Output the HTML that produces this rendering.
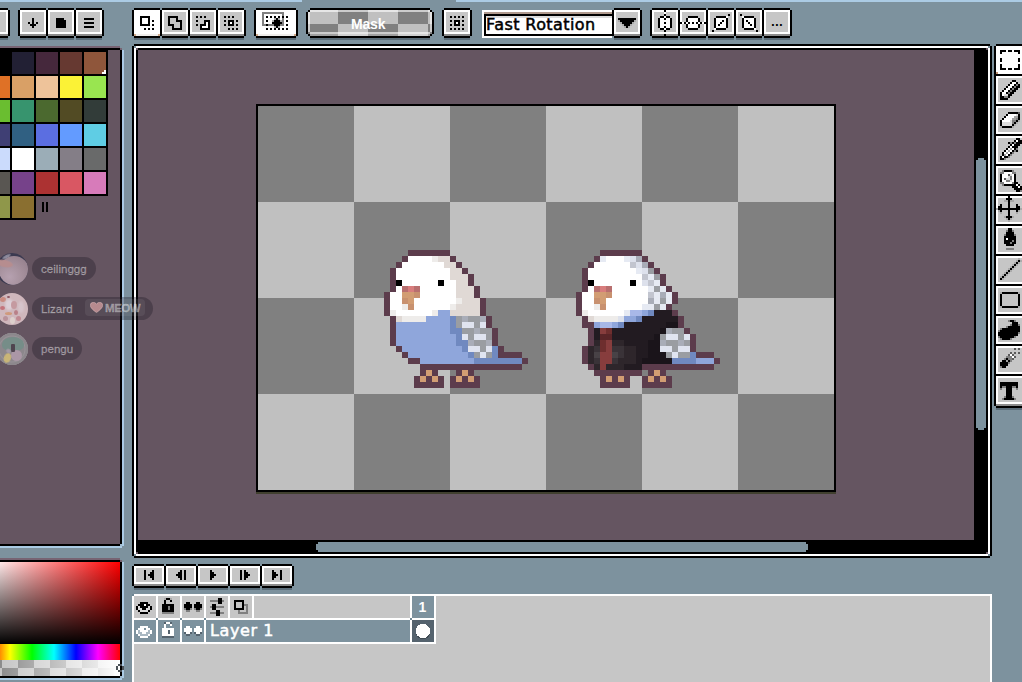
<!DOCTYPE html>
<html lang="en"><head><meta charset="utf-8"><title>Aseprite</title>
<style>
html,body{margin:0;padding:0;background:#7d929e;}
#app{position:relative;width:1022px;height:682px;overflow:hidden;background:#7d929e;font-family:"Liberation Sans",sans-serif;}
.t{position:absolute;white-space:pre;line-height:1;}

.av{position:absolute;left:-4px;width:32px;height:32px;border-radius:50%;overflow:hidden}
.av i{position:absolute;display:block;border-radius:50%}
.pill{position:absolute;left:32px;height:23px;border-radius:12px;background:rgba(28,22,32,.33);color:rgba(255,255,255,.38);-webkit-text-stroke:0.3px rgba(255,255,255,.38);
 font:500 11.6px "Liberation Sans",sans-serif;line-height:24px;white-space:pre;box-sizing:border-box;padding-left:9px}
.badge{position:absolute;left:53px;top:2px;height:17px;width:60px;border-radius:4px;background:rgba(255,255,255,.07);
 font:bold 11.5px "Liberation Sans",sans-serif;line-height:18.5px;box-sizing:border-box;padding-left:20px;letter-spacing:-0.45px}
.heart{position:absolute;left:5px;top:3px;width:13px;height:11px}

</style></head><body>
<div id="app">
<svg width="1022" height="682" viewBox="0 0 1022 682" shape-rendering="crispEdges" style="position:absolute;left:0;top:0"><rect x="0" y="0" width="1022" height="682" fill="#7d929e"/>
<rect x="0" y="0" width="302" height="2" fill="#abcbe4"/>
<rect x="456" y="0" width="566" height="2" fill="#abcbe4"/>
<rect x="-18" y="8" width="26" height="30" fill="#000"/>
<rect x="-20" y="10" width="30" height="26" fill="#000"/>
<rect x="-18" y="10" width="26" height="24" fill="#fff"/>
<rect x="-16" y="12" width="22" height="20" fill="#c6c6c6"/>
<rect x="-18" y="34" width="26" height="2" fill="#8c8c8c"/>
<rect x="-18" y="38" width="26" height="2" fill="#5b6d79"/>
<rect x="20" y="8" width="26" height="30" fill="#000"/>
<rect x="18" y="10" width="30" height="26" fill="#000"/>
<rect x="20" y="10" width="26" height="24" fill="#fff"/>
<rect x="22" y="12" width="22" height="20" fill="#c6c6c6"/>
<rect x="20" y="34" width="26" height="2" fill="#8c8c8c"/>
<rect x="20" y="38" width="26" height="2" fill="#5b6d79"/>
<rect x="32" y="18" width="2" height="2" fill="#000"/>
<rect x="32" y="20" width="2" height="2" fill="#000"/>
<rect x="28" y="22" width="2" height="2" fill="#000"/>
<rect x="32" y="22" width="2" height="2" fill="#000"/>
<rect x="36" y="22" width="2" height="2" fill="#000"/>
<rect x="30" y="24" width="6" height="2" fill="#000"/>
<rect x="32" y="26" width="2" height="2" fill="#000"/>
<rect x="48" y="8" width="26" height="30" fill="#000"/>
<rect x="46" y="10" width="30" height="26" fill="#000"/>
<rect x="48" y="10" width="26" height="24" fill="#fff"/>
<rect x="50" y="12" width="22" height="20" fill="#c6c6c6"/>
<rect x="48" y="34" width="26" height="2" fill="#8c8c8c"/>
<rect x="48" y="38" width="26" height="2" fill="#5b6d79"/>
<rect x="56" y="18" width="8" height="2" fill="#000"/>
<rect x="56" y="20" width="10" height="2" fill="#000"/>
<rect x="56" y="22" width="10" height="2" fill="#000"/>
<rect x="56" y="24" width="10" height="2" fill="#000"/>
<rect x="56" y="26" width="10" height="2" fill="#000"/>
<rect x="76" y="8" width="26" height="30" fill="#000"/>
<rect x="74" y="10" width="30" height="26" fill="#000"/>
<rect x="76" y="10" width="26" height="24" fill="#fff"/>
<rect x="78" y="12" width="22" height="20" fill="#c6c6c6"/>
<rect x="76" y="34" width="26" height="2" fill="#8c8c8c"/>
<rect x="76" y="38" width="26" height="2" fill="#5b6d79"/>
<rect x="84" y="18" width="10" height="2" fill="#000"/>
<rect x="84" y="22" width="10" height="2" fill="#000"/>
<rect x="84" y="26" width="10" height="2" fill="#000"/>
<rect x="134" y="8" width="26" height="30" fill="#000"/>
<rect x="132" y="10" width="30" height="26" fill="#000"/>
<rect x="134" y="10" width="26" height="24" fill="#fff"/>
<rect x="134" y="34" width="26" height="2" fill="#f0eeec"/>
<rect x="134" y="34" width="2" height="2" fill="#cfa888"/>
<rect x="158" y="34" width="2" height="2" fill="#cfa888"/>
<rect x="134" y="38" width="26" height="2" fill="#5b6d79"/>
<rect x="140" y="16" width="10" height="2" fill="#000"/>
<rect x="140" y="18" width="2" height="2" fill="#000"/>
<rect x="148" y="18" width="2" height="2" fill="#000"/>
<rect x="140" y="20" width="2" height="2" fill="#000"/>
<rect x="148" y="20" width="2" height="2" fill="#000"/>
<rect x="152" y="20" width="2" height="2" fill="#000"/>
<rect x="140" y="22" width="2" height="2" fill="#000"/>
<rect x="148" y="22" width="2" height="2" fill="#000"/>
<rect x="140" y="24" width="10" height="2" fill="#000"/>
<rect x="152" y="24" width="2" height="2" fill="#000"/>
<rect x="144" y="28" width="2" height="2" fill="#000"/>
<rect x="148" y="28" width="2" height="2" fill="#000"/>
<rect x="152" y="28" width="2" height="2" fill="#000"/>
<rect x="162" y="8" width="26" height="30" fill="#000"/>
<rect x="160" y="10" width="30" height="26" fill="#000"/>
<rect x="162" y="10" width="26" height="24" fill="#fff"/>
<rect x="164" y="12" width="22" height="20" fill="#c6c6c6"/>
<rect x="162" y="34" width="26" height="2" fill="#8c8c8c"/>
<rect x="162" y="38" width="26" height="2" fill="#5b6d79"/>
<rect x="168" y="16" width="10" height="2" fill="#000"/>
<rect x="168" y="18" width="2" height="2" fill="#000"/>
<rect x="176" y="18" width="2" height="2" fill="#000"/>
<rect x="168" y="20" width="2" height="2" fill="#000"/>
<rect x="176" y="20" width="6" height="2" fill="#000"/>
<rect x="168" y="22" width="2" height="2" fill="#000"/>
<rect x="180" y="22" width="2" height="2" fill="#000"/>
<rect x="168" y="24" width="6" height="2" fill="#000"/>
<rect x="180" y="24" width="2" height="2" fill="#000"/>
<rect x="172" y="26" width="2" height="2" fill="#000"/>
<rect x="180" y="26" width="2" height="2" fill="#000"/>
<rect x="172" y="28" width="10" height="2" fill="#000"/>
<rect x="190" y="8" width="26" height="30" fill="#000"/>
<rect x="188" y="10" width="30" height="26" fill="#000"/>
<rect x="190" y="10" width="26" height="24" fill="#fff"/>
<rect x="192" y="12" width="22" height="20" fill="#c6c6c6"/>
<rect x="190" y="34" width="26" height="2" fill="#8c8c8c"/>
<rect x="190" y="38" width="26" height="2" fill="#5b6d79"/>
<rect x="196" y="16" width="2" height="2" fill="#000"/>
<rect x="200" y="16" width="2" height="2" fill="#000"/>
<rect x="204" y="16" width="2" height="2" fill="#000"/>
<rect x="196" y="20" width="2" height="2" fill="#000"/>
<rect x="204" y="20" width="6" height="2" fill="#000"/>
<rect x="204" y="22" width="2" height="2" fill="#000"/>
<rect x="206" y="22" width="2" height="2" fill="#fff"/>
<rect x="208" y="22" width="2" height="2" fill="#000"/>
<rect x="196" y="24" width="2" height="2" fill="#000"/>
<rect x="200" y="24" width="6" height="2" fill="#000"/>
<rect x="206" y="24" width="2" height="2" fill="#fff"/>
<rect x="208" y="24" width="2" height="2" fill="#000"/>
<rect x="200" y="26" width="2" height="2" fill="#000"/>
<rect x="202" y="26" width="6" height="2" fill="#fff"/>
<rect x="208" y="26" width="2" height="2" fill="#000"/>
<rect x="200" y="28" width="10" height="2" fill="#000"/>
<rect x="218" y="8" width="26" height="30" fill="#000"/>
<rect x="216" y="10" width="30" height="26" fill="#000"/>
<rect x="218" y="10" width="26" height="24" fill="#fff"/>
<rect x="220" y="12" width="22" height="20" fill="#c6c6c6"/>
<rect x="218" y="34" width="26" height="2" fill="#8c8c8c"/>
<rect x="218" y="38" width="26" height="2" fill="#5b6d79"/>
<rect x="224" y="16" width="2" height="2" fill="#000"/>
<rect x="228" y="16" width="2" height="2" fill="#000"/>
<rect x="232" y="16" width="2" height="2" fill="#000"/>
<rect x="224" y="20" width="2" height="2" fill="#000"/>
<rect x="228" y="20" width="6" height="2" fill="#000"/>
<rect x="236" y="20" width="2" height="2" fill="#000"/>
<rect x="228" y="22" width="2" height="2" fill="#000"/>
<rect x="230" y="22" width="2" height="2" fill="#fff"/>
<rect x="232" y="22" width="2" height="2" fill="#000"/>
<rect x="224" y="24" width="2" height="2" fill="#000"/>
<rect x="228" y="24" width="6" height="2" fill="#000"/>
<rect x="236" y="24" width="2" height="2" fill="#000"/>
<rect x="228" y="28" width="2" height="2" fill="#000"/>
<rect x="232" y="28" width="2" height="2" fill="#000"/>
<rect x="236" y="28" width="2" height="2" fill="#000"/>
<rect x="256" y="8" width="40" height="30" fill="#000"/>
<rect x="254" y="10" width="44" height="26" fill="#000"/>
<rect x="256" y="10" width="40" height="24" fill="#fff"/>
<rect x="256" y="34" width="40" height="2" fill="#f0eeec"/>
<rect x="256" y="34" width="2" height="2" fill="#cfa888"/>
<rect x="294" y="34" width="2" height="2" fill="#cfa888"/>
<rect x="256" y="38" width="40" height="2" fill="#5b6d79"/>
<rect x="262" y="12" width="22" height="2" fill="#808080"/>
<rect x="262" y="14" width="2" height="2" fill="#808080"/>
<rect x="282" y="14" width="2" height="2" fill="#808080"/>
<rect x="262" y="16" width="2" height="2" fill="#808080"/>
<rect x="266" y="16" width="2" height="2" fill="#000"/>
<rect x="270" y="16" width="2" height="2" fill="#000"/>
<rect x="274" y="16" width="2" height="2" fill="#000"/>
<rect x="278" y="16" width="2" height="2" fill="#000"/>
<rect x="282" y="16" width="2" height="2" fill="#000"/>
<rect x="286" y="16" width="2" height="2" fill="#000"/>
<rect x="262" y="18" width="2" height="2" fill="#808080"/>
<rect x="274" y="18" width="2" height="2" fill="#aaaaaa"/>
<rect x="276" y="18" width="2" height="2" fill="#000"/>
<rect x="278" y="18" width="2" height="2" fill="#aaaaaa"/>
<rect x="282" y="18" width="2" height="2" fill="#808080"/>
<rect x="262" y="20" width="2" height="2" fill="#808080"/>
<rect x="266" y="20" width="2" height="2" fill="#000"/>
<rect x="272" y="20" width="2" height="2" fill="#aaaaaa"/>
<rect x="274" y="20" width="6" height="2" fill="#000"/>
<rect x="280" y="20" width="2" height="2" fill="#aaaaaa"/>
<rect x="282" y="20" width="2" height="2" fill="#808080"/>
<rect x="286" y="20" width="2" height="2" fill="#000"/>
<rect x="262" y="22" width="2" height="2" fill="#808080"/>
<rect x="272" y="22" width="10" height="2" fill="#000"/>
<rect x="282" y="22" width="2" height="2" fill="#808080"/>
<rect x="262" y="24" width="4" height="2" fill="#808080"/>
<rect x="266" y="24" width="2" height="2" fill="#000"/>
<rect x="268" y="24" width="6" height="2" fill="#808080"/>
<rect x="274" y="24" width="6" height="2" fill="#000"/>
<rect x="280" y="24" width="4" height="2" fill="#808080"/>
<rect x="286" y="24" width="2" height="2" fill="#000"/>
<rect x="274" y="26" width="2" height="2" fill="#aaaaaa"/>
<rect x="276" y="26" width="2" height="2" fill="#000"/>
<rect x="278" y="26" width="2" height="2" fill="#aaaaaa"/>
<rect x="266" y="28" width="2" height="2" fill="#000"/>
<rect x="270" y="28" width="2" height="2" fill="#000"/>
<rect x="274" y="28" width="2" height="2" fill="#000"/>
<rect x="278" y="28" width="2" height="2" fill="#000"/>
<rect x="282" y="28" width="2" height="2" fill="#000"/>
<rect x="286" y="28" width="2" height="2" fill="#000"/>
<rect x="310" y="8" width="120" height="30" fill="#000"/>
<rect x="308" y="10" width="124" height="26" fill="#000"/>
<rect x="306" y="12" width="128" height="22" fill="#000"/>
<rect x="310" y="38" width="120" height="2" fill="#5b6d79"/>
<rect x="308" y="10" width="30" height="14" fill="#c0c0c0"/>
<rect x="308" y="24" width="30" height="12" fill="#808080"/>
<rect x="338" y="10" width="30" height="14" fill="#808080"/>
<rect x="338" y="24" width="30" height="12" fill="#c0c0c0"/>
<rect x="368" y="10" width="30" height="14" fill="#c0c0c0"/>
<rect x="368" y="24" width="30" height="12" fill="#808080"/>
<rect x="398" y="10" width="30" height="14" fill="#808080"/>
<rect x="398" y="24" width="30" height="12" fill="#c0c0c0"/>
<rect x="428" y="10" width="4" height="14" fill="#c0c0c0"/>
<rect x="428" y="24" width="4" height="12" fill="#808080"/>
<rect x="310" y="10" width="120" height="2" fill="#fff" fill-opacity="0.6"/>
<rect x="308" y="12" width="2" height="20" fill="#fff" fill-opacity="0.6"/>
<rect x="430" y="12" width="2" height="20" fill="#fff" fill-opacity="0.6"/>
<rect x="310" y="32" width="120" height="2" fill="#fff" fill-opacity="0.6"/>
<rect x="310" y="34" width="120" height="2" fill="#fff" fill-opacity="0.25"/>
<rect x="308" y="10" width="2" height="2" fill="#000"/>
<rect x="430" y="10" width="2" height="2" fill="#000"/>
<rect x="308" y="34" width="2" height="2" fill="#000"/>
<rect x="430" y="34" width="2" height="2" fill="#000"/>
<rect x="444" y="8" width="26" height="30" fill="#000"/>
<rect x="442" y="10" width="30" height="26" fill="#000"/>
<rect x="444" y="10" width="26" height="24" fill="#fff"/>
<rect x="446" y="12" width="22" height="20" fill="#c6c6c6"/>
<rect x="444" y="34" width="26" height="2" fill="#8c8c8c"/>
<rect x="444" y="38" width="26" height="2" fill="#5b6d79"/>
<rect x="450" y="16" width="2" height="2" fill="#000"/>
<rect x="454" y="16" width="2" height="2" fill="#000"/>
<rect x="458" y="16" width="2" height="2" fill="#000"/>
<rect x="462" y="16" width="2" height="2" fill="#000"/>
<rect x="450" y="20" width="2" height="2" fill="#000"/>
<rect x="454" y="20" width="6" height="2" fill="#000"/>
<rect x="462" y="20" width="2" height="2" fill="#000"/>
<rect x="454" y="22" width="2" height="2" fill="#000"/>
<rect x="456" y="22" width="2" height="2" fill="#fff"/>
<rect x="458" y="22" width="2" height="2" fill="#000"/>
<rect x="450" y="24" width="2" height="2" fill="#000"/>
<rect x="454" y="24" width="6" height="2" fill="#000"/>
<rect x="462" y="24" width="2" height="2" fill="#000"/>
<rect x="450" y="28" width="2" height="2" fill="#000"/>
<rect x="454" y="28" width="2" height="2" fill="#000"/>
<rect x="458" y="28" width="2" height="2" fill="#000"/>
<rect x="462" y="28" width="2" height="2" fill="#000"/>
<rect x="482" y="10" width="130" height="28" fill="#fff"/>
<rect x="484" y="12" width="128" height="2" fill="#b09a8e"/>
<rect x="484" y="14" width="128" height="22" fill="#000"/>
<rect x="486" y="16" width="126" height="18" fill="#fff"/>
<rect x="486" y="16" width="126" height="2" fill="#dcdcdc"/>
<rect x="614" y="8" width="26" height="30" fill="#000"/>
<rect x="612" y="10" width="30" height="26" fill="#000"/>
<rect x="614" y="10" width="26" height="24" fill="#fff"/>
<rect x="616" y="12" width="22" height="20" fill="#c6c6c6"/>
<rect x="614" y="34" width="26" height="2" fill="#8c8c8c"/>
<rect x="614" y="38" width="26" height="2" fill="#5b6d79"/>
<rect x="618" y="18" width="18" height="2" fill="#000"/>
<rect x="618" y="20" width="2" height="2" fill="#aaaaaa"/>
<rect x="620" y="20" width="14" height="2" fill="#000"/>
<rect x="634" y="20" width="2" height="2" fill="#aaaaaa"/>
<rect x="620" y="22" width="2" height="2" fill="#aaaaaa"/>
<rect x="622" y="22" width="10" height="2" fill="#000"/>
<rect x="632" y="22" width="2" height="2" fill="#aaaaaa"/>
<rect x="622" y="24" width="2" height="2" fill="#aaaaaa"/>
<rect x="624" y="24" width="6" height="2" fill="#000"/>
<rect x="630" y="24" width="2" height="2" fill="#aaaaaa"/>
<rect x="624" y="26" width="2" height="2" fill="#aaaaaa"/>
<rect x="626" y="26" width="2" height="2" fill="#000"/>
<rect x="628" y="26" width="2" height="2" fill="#aaaaaa"/>
<rect x="652" y="8" width="26" height="30" fill="#000"/>
<rect x="650" y="10" width="30" height="26" fill="#000"/>
<rect x="652" y="10" width="26" height="24" fill="#fff"/>
<rect x="654" y="12" width="22" height="20" fill="#c6c6c6"/>
<rect x="652" y="34" width="26" height="2" fill="#8c8c8c"/>
<rect x="652" y="38" width="26" height="2" fill="#5b6d79"/>
<rect x="664" y="10" width="2" height="2" fill="#000"/>
<rect x="664" y="12" width="2" height="2" fill="#fff"/>
<rect x="664" y="14" width="2" height="2" fill="#000"/>
<rect x="660" y="16" width="4" height="2" fill="#000"/>
<rect x="664" y="16" width="2" height="2" fill="#fff"/>
<rect x="666" y="16" width="4" height="2" fill="#000"/>
<rect x="658" y="18" width="2" height="2" fill="#000"/>
<rect x="660" y="18" width="4" height="2" fill="#fff"/>
<rect x="664" y="18" width="2" height="2" fill="#000"/>
<rect x="666" y="18" width="4" height="2" fill="#fff"/>
<rect x="670" y="18" width="2" height="2" fill="#000"/>
<rect x="658" y="20" width="2" height="2" fill="#000"/>
<rect x="660" y="20" width="10" height="2" fill="#fff"/>
<rect x="670" y="20" width="2" height="2" fill="#000"/>
<rect x="658" y="22" width="2" height="2" fill="#000"/>
<rect x="660" y="22" width="4" height="2" fill="#fff"/>
<rect x="664" y="22" width="2" height="2" fill="#000"/>
<rect x="666" y="22" width="4" height="2" fill="#fff"/>
<rect x="670" y="22" width="2" height="2" fill="#000"/>
<rect x="658" y="24" width="2" height="2" fill="#000"/>
<rect x="660" y="24" width="10" height="2" fill="#fff"/>
<rect x="670" y="24" width="2" height="2" fill="#000"/>
<rect x="658" y="26" width="2" height="2" fill="#000"/>
<rect x="660" y="26" width="4" height="2" fill="#fff"/>
<rect x="664" y="26" width="2" height="2" fill="#000"/>
<rect x="666" y="26" width="4" height="2" fill="#fff"/>
<rect x="670" y="26" width="2" height="2" fill="#000"/>
<rect x="660" y="28" width="4" height="2" fill="#000"/>
<rect x="664" y="28" width="2" height="2" fill="#fff"/>
<rect x="666" y="28" width="4" height="2" fill="#000"/>
<rect x="664" y="30" width="2" height="2" fill="#000"/>
<rect x="664" y="32" width="2" height="2" fill="#fff"/>
<rect x="664" y="34" width="2" height="2" fill="#000"/>
<rect x="680" y="8" width="26" height="30" fill="#000"/>
<rect x="678" y="10" width="30" height="26" fill="#000"/>
<rect x="680" y="10" width="26" height="24" fill="#fff"/>
<rect x="682" y="12" width="22" height="20" fill="#c6c6c6"/>
<rect x="680" y="34" width="26" height="2" fill="#8c8c8c"/>
<rect x="680" y="38" width="26" height="2" fill="#5b6d79"/>
<rect x="688" y="16" width="10" height="2" fill="#000"/>
<rect x="686" y="18" width="2" height="2" fill="#000"/>
<rect x="688" y="18" width="10" height="2" fill="#fff"/>
<rect x="698" y="18" width="2" height="2" fill="#000"/>
<rect x="686" y="20" width="2" height="2" fill="#000"/>
<rect x="688" y="20" width="10" height="2" fill="#fff"/>
<rect x="698" y="20" width="2" height="2" fill="#000"/>
<rect x="680" y="22" width="2" height="2" fill="#000"/>
<rect x="682" y="22" width="2" height="2" fill="#fff"/>
<rect x="684" y="22" width="2" height="2" fill="#000"/>
<rect x="686" y="22" width="2" height="2" fill="#fff"/>
<rect x="688" y="22" width="2" height="2" fill="#000"/>
<rect x="690" y="22" width="2" height="2" fill="#fff"/>
<rect x="692" y="22" width="2" height="2" fill="#000"/>
<rect x="694" y="22" width="2" height="2" fill="#fff"/>
<rect x="696" y="22" width="2" height="2" fill="#000"/>
<rect x="698" y="22" width="2" height="2" fill="#fff"/>
<rect x="700" y="22" width="2" height="2" fill="#000"/>
<rect x="702" y="22" width="2" height="2" fill="#fff"/>
<rect x="704" y="22" width="2" height="2" fill="#000"/>
<rect x="686" y="24" width="2" height="2" fill="#000"/>
<rect x="688" y="24" width="10" height="2" fill="#fff"/>
<rect x="698" y="24" width="2" height="2" fill="#000"/>
<rect x="686" y="26" width="2" height="2" fill="#000"/>
<rect x="688" y="26" width="10" height="2" fill="#fff"/>
<rect x="698" y="26" width="2" height="2" fill="#000"/>
<rect x="688" y="28" width="10" height="2" fill="#000"/>
<rect x="708" y="8" width="26" height="30" fill="#000"/>
<rect x="706" y="10" width="30" height="26" fill="#000"/>
<rect x="708" y="10" width="26" height="24" fill="#fff"/>
<rect x="710" y="12" width="22" height="20" fill="#c6c6c6"/>
<rect x="708" y="34" width="26" height="2" fill="#8c8c8c"/>
<rect x="708" y="38" width="26" height="2" fill="#5b6d79"/>
<rect x="728" y="14" width="2" height="2" fill="#000"/>
<rect x="716" y="16" width="10" height="2" fill="#000"/>
<rect x="726" y="16" width="2" height="2" fill="#fff"/>
<rect x="714" y="18" width="2" height="2" fill="#000"/>
<rect x="716" y="18" width="10" height="2" fill="#fff"/>
<rect x="726" y="18" width="2" height="2" fill="#000"/>
<rect x="714" y="20" width="2" height="2" fill="#000"/>
<rect x="716" y="20" width="6" height="2" fill="#fff"/>
<rect x="722" y="20" width="2" height="2" fill="#000"/>
<rect x="724" y="20" width="2" height="2" fill="#fff"/>
<rect x="726" y="20" width="2" height="2" fill="#000"/>
<rect x="714" y="22" width="2" height="2" fill="#000"/>
<rect x="716" y="22" width="4" height="2" fill="#fff"/>
<rect x="720" y="22" width="2" height="2" fill="#000"/>
<rect x="722" y="22" width="4" height="2" fill="#fff"/>
<rect x="726" y="22" width="2" height="2" fill="#000"/>
<rect x="714" y="24" width="2" height="2" fill="#000"/>
<rect x="716" y="24" width="2" height="2" fill="#fff"/>
<rect x="718" y="24" width="2" height="2" fill="#000"/>
<rect x="720" y="24" width="6" height="2" fill="#fff"/>
<rect x="726" y="24" width="2" height="2" fill="#000"/>
<rect x="714" y="26" width="2" height="2" fill="#000"/>
<rect x="716" y="26" width="10" height="2" fill="#fff"/>
<rect x="726" y="26" width="2" height="2" fill="#000"/>
<rect x="714" y="28" width="2" height="2" fill="#fff"/>
<rect x="716" y="28" width="10" height="2" fill="#000"/>
<rect x="712" y="30" width="2" height="2" fill="#000"/>
<rect x="736" y="8" width="26" height="30" fill="#000"/>
<rect x="734" y="10" width="30" height="26" fill="#000"/>
<rect x="736" y="10" width="26" height="24" fill="#fff"/>
<rect x="738" y="12" width="22" height="20" fill="#c6c6c6"/>
<rect x="736" y="34" width="26" height="2" fill="#8c8c8c"/>
<rect x="736" y="38" width="26" height="2" fill="#5b6d79"/>
<rect x="740" y="14" width="2" height="2" fill="#000"/>
<rect x="742" y="16" width="2" height="2" fill="#fff"/>
<rect x="744" y="16" width="10" height="2" fill="#000"/>
<rect x="742" y="18" width="2" height="2" fill="#000"/>
<rect x="744" y="18" width="10" height="2" fill="#fff"/>
<rect x="754" y="18" width="2" height="2" fill="#000"/>
<rect x="742" y="20" width="2" height="2" fill="#000"/>
<rect x="744" y="20" width="2" height="2" fill="#fff"/>
<rect x="746" y="20" width="2" height="2" fill="#000"/>
<rect x="748" y="20" width="6" height="2" fill="#fff"/>
<rect x="754" y="20" width="2" height="2" fill="#000"/>
<rect x="742" y="22" width="2" height="2" fill="#000"/>
<rect x="744" y="22" width="4" height="2" fill="#fff"/>
<rect x="748" y="22" width="2" height="2" fill="#000"/>
<rect x="750" y="22" width="4" height="2" fill="#fff"/>
<rect x="754" y="22" width="2" height="2" fill="#000"/>
<rect x="742" y="24" width="2" height="2" fill="#000"/>
<rect x="744" y="24" width="6" height="2" fill="#fff"/>
<rect x="750" y="24" width="2" height="2" fill="#000"/>
<rect x="752" y="24" width="2" height="2" fill="#fff"/>
<rect x="754" y="24" width="2" height="2" fill="#000"/>
<rect x="742" y="26" width="2" height="2" fill="#000"/>
<rect x="744" y="26" width="10" height="2" fill="#fff"/>
<rect x="754" y="26" width="2" height="2" fill="#000"/>
<rect x="744" y="28" width="10" height="2" fill="#000"/>
<rect x="754" y="28" width="2" height="2" fill="#fff"/>
<rect x="756" y="30" width="2" height="2" fill="#000"/>
<rect x="764" y="8" width="26" height="30" fill="#000"/>
<rect x="762" y="10" width="30" height="26" fill="#000"/>
<rect x="764" y="10" width="26" height="24" fill="#fff"/>
<rect x="766" y="12" width="22" height="20" fill="#c6c6c6"/>
<rect x="764" y="34" width="26" height="2" fill="#8c8c8c"/>
<rect x="764" y="38" width="26" height="2" fill="#5b6d79"/>
<rect x="0" y="46" width="120" height="2" fill="#776473"/>
<rect x="0" y="48" width="120" height="2" fill="#000"/>
<rect x="120" y="50" width="2" height="494" fill="#000"/>
<rect x="0" y="544" width="120" height="2" fill="#000"/>
<rect x="120" y="48" width="2" height="2" fill="#776473"/>
<rect x="120" y="544" width="2" height="2" fill="#9fb9cc"/>
<rect x="122" y="50" width="2" height="496" fill="#abcbe4"/>
<rect x="0" y="546" width="122" height="2" fill="#abcbe4"/>
<rect x="0" y="50" width="120" height="494" fill="#655561"/>
<rect x="0" y="50" width="108" height="146" fill="#000"/>
<rect x="0" y="196" width="36" height="24" fill="#000"/>
<rect x="0" y="52" width="10" height="22" fill="#000000"/>
<rect x="12" y="52" width="22" height="22" fill="#222034"/>
<rect x="36" y="52" width="22" height="22" fill="#45283c"/>
<rect x="60" y="52" width="22" height="22" fill="#663931"/>
<rect x="84" y="52" width="22" height="22" fill="#8f563b"/>
<rect x="0" y="76" width="10" height="22" fill="#df7126"/>
<rect x="12" y="76" width="22" height="22" fill="#d9a066"/>
<rect x="36" y="76" width="22" height="22" fill="#eec39a"/>
<rect x="60" y="76" width="22" height="22" fill="#fbf236"/>
<rect x="84" y="76" width="22" height="22" fill="#99e550"/>
<rect x="0" y="100" width="10" height="22" fill="#6abe30"/>
<rect x="12" y="100" width="22" height="22" fill="#37946e"/>
<rect x="36" y="100" width="22" height="22" fill="#4b692f"/>
<rect x="60" y="100" width="22" height="22" fill="#524b24"/>
<rect x="84" y="100" width="22" height="22" fill="#323c39"/>
<rect x="0" y="124" width="10" height="22" fill="#3f3f74"/>
<rect x="12" y="124" width="22" height="22" fill="#306082"/>
<rect x="36" y="124" width="22" height="22" fill="#5b6ee1"/>
<rect x="60" y="124" width="22" height="22" fill="#639bff"/>
<rect x="84" y="124" width="22" height="22" fill="#5fcde4"/>
<rect x="0" y="148" width="10" height="22" fill="#cbdbfc"/>
<rect x="12" y="148" width="22" height="22" fill="#ffffff"/>
<rect x="36" y="148" width="22" height="22" fill="#9badb7"/>
<rect x="60" y="148" width="22" height="22" fill="#847e87"/>
<rect x="84" y="148" width="22" height="22" fill="#696a6a"/>
<rect x="0" y="172" width="10" height="22" fill="#595652"/>
<rect x="12" y="172" width="22" height="22" fill="#76428a"/>
<rect x="36" y="172" width="22" height="22" fill="#ac3232"/>
<rect x="60" y="172" width="22" height="22" fill="#d95763"/>
<rect x="84" y="172" width="22" height="22" fill="#d77bba"/>
<rect x="0" y="196" width="10" height="22" fill="#8f974a"/>
<rect x="12" y="196" width="22" height="22" fill="#8a6f30"/>
<rect x="104" y="70" width="2" height="2" fill="#fff"/>
<rect x="102" y="72" width="4" height="2" fill="#fff"/>
<rect x="42" y="202" width="2" height="10" fill="#000"/>
<rect x="46" y="202" width="2" height="10" fill="#000"/>
<rect x="0" y="558" width="120" height="2" fill="#776473"/>
<rect x="0" y="560" width="120" height="2" fill="#000"/>
<rect x="120" y="562" width="2" height="114" fill="#000"/>
<rect x="120" y="560" width="2" height="2" fill="#776473"/>
<rect x="0" y="676" width="120" height="2" fill="#000"/>
<rect x="120" y="676" width="2" height="2" fill="#9fb9cc"/>
<rect x="122" y="562" width="2" height="116" fill="#abcbe4"/>
<rect x="0" y="678" width="122" height="2" fill="#abcbe4"/>
<defs><linearGradient id="gs" x1="0" x2="1" y1="0" y2="0"><stop offset="0" stop-color="#fff"/><stop offset="1" stop-color="#f00"/></linearGradient><linearGradient id="gv" x1="0" x2="0" y1="0" y2="1"><stop offset="0" stop-color="#000" stop-opacity="0"/><stop offset="1" stop-color="#000"/></linearGradient><linearGradient id="gh" x1="0" x2="1" y1="0" y2="0"><stop offset="0" stop-color="#f00"/><stop offset="0.1667" stop-color="#ff0"/><stop offset="0.3333" stop-color="#0f0"/><stop offset="0.5" stop-color="#0ff"/><stop offset="0.6667" stop-color="#00f"/><stop offset="0.8333" stop-color="#f0f"/><stop offset="1" stop-color="#f00"/></linearGradient><linearGradient id="ga" x1="0" x2="1" y1="0" y2="0"><stop offset="0" stop-color="#fff" stop-opacity="0"/><stop offset="1" stop-color="#fff"/></linearGradient><clipPath id="cpL"><rect x="0" y="562" width="120" height="114"/></clipPath></defs>
<g clip-path="url(#cpL)">
<rect x="-12" y="562" width="132" height="82" fill="url(#gs)"/>
<rect x="-12" y="562" width="132" height="82" fill="url(#gv)"/>
<rect x="-12" y="644" width="132" height="16" fill="url(#gh)"/>
<rect x="-14" y="660" width="16" height="8" fill="#808080"/>
<rect x="-14" y="668" width="16" height="8" fill="#c0c0c0"/>
<rect x="2" y="660" width="16" height="8" fill="#c0c0c0"/>
<rect x="2" y="668" width="16" height="8" fill="#808080"/>
<rect x="18" y="660" width="16" height="8" fill="#808080"/>
<rect x="18" y="668" width="16" height="8" fill="#c0c0c0"/>
<rect x="34" y="660" width="16" height="8" fill="#c0c0c0"/>
<rect x="34" y="668" width="16" height="8" fill="#808080"/>
<rect x="50" y="660" width="16" height="8" fill="#808080"/>
<rect x="50" y="668" width="16" height="8" fill="#c0c0c0"/>
<rect x="66" y="660" width="16" height="8" fill="#c0c0c0"/>
<rect x="66" y="668" width="16" height="8" fill="#808080"/>
<rect x="82" y="660" width="16" height="8" fill="#808080"/>
<rect x="82" y="668" width="16" height="8" fill="#c0c0c0"/>
<rect x="98" y="660" width="16" height="8" fill="#c0c0c0"/>
<rect x="98" y="668" width="16" height="8" fill="#808080"/>
<rect x="114" y="660" width="16" height="8" fill="#808080"/>
<rect x="114" y="668" width="16" height="8" fill="#c0c0c0"/>
<rect x="-12" y="660" width="132" height="16" fill="url(#ga)"/>
</g>
<rect x="118" y="664" width="4" height="2" fill="#4c5258"/>
<rect x="116" y="666" width="2" height="2" fill="#4c5258"/>
<rect x="122" y="666" width="2" height="2" fill="#4c5258"/>
<rect x="116" y="668" width="2" height="2" fill="#4c5258"/>
<rect x="122" y="668" width="2" height="2" fill="#4c5258"/>
<rect x="118" y="670" width="4" height="2" fill="#4c5258"/>
<rect x="134" y="44" width="856" height="514" fill="#000"/>
<rect x="132" y="46" width="860" height="510" fill="#000"/>
<rect x="134" y="46" width="856" height="510" fill="#fff"/>
<rect x="134" y="46" width="2" height="2" fill="#7d929e"/>
<rect x="988" y="46" width="2" height="2" fill="#7d929e"/>
<rect x="134" y="554" width="2" height="2" fill="#7d929e"/>
<rect x="988" y="554" width="2" height="2" fill="#7d929e"/>
<rect x="136" y="48" width="852" height="506" fill="#000"/>
<rect x="138" y="50" width="836" height="490" fill="#655561"/>
<rect x="136" y="48" width="2" height="2" fill="#655561"/>
<rect x="986" y="48" width="2" height="2" fill="#655561"/>
<rect x="136" y="552" width="2" height="2" fill="#655561"/>
<rect x="986" y="552" width="2" height="2" fill="#655561"/>
<rect x="976" y="160" width="10" height="268" fill="#7d929e"/>
<rect x="978" y="158" width="6" height="272" fill="#7d929e"/>
<rect x="318" y="542" width="488" height="10" fill="#7d929e"/>
<rect x="316" y="544" width="492" height="6" fill="#7d929e"/>
<rect x="256" y="104" width="580" height="388" fill="#000"/>
<rect x="256" y="492" width="580" height="2" fill="#41402f"/>
<rect x="258" y="106" width="96" height="96" fill="#808080"/>
<rect x="354" y="106" width="96" height="96" fill="#c0c0c0"/>
<rect x="450" y="106" width="96" height="96" fill="#808080"/>
<rect x="546" y="106" width="96" height="96" fill="#c0c0c0"/>
<rect x="642" y="106" width="96" height="96" fill="#808080"/>
<rect x="738" y="106" width="96" height="96" fill="#c0c0c0"/>
<rect x="258" y="202" width="96" height="96" fill="#c0c0c0"/>
<rect x="354" y="202" width="96" height="96" fill="#808080"/>
<rect x="450" y="202" width="96" height="96" fill="#c0c0c0"/>
<rect x="546" y="202" width="96" height="96" fill="#808080"/>
<rect x="642" y="202" width="96" height="96" fill="#c0c0c0"/>
<rect x="738" y="202" width="96" height="96" fill="#808080"/>
<rect x="258" y="298" width="96" height="96" fill="#808080"/>
<rect x="354" y="298" width="96" height="96" fill="#c0c0c0"/>
<rect x="450" y="298" width="96" height="96" fill="#808080"/>
<rect x="546" y="298" width="96" height="96" fill="#c0c0c0"/>
<rect x="642" y="298" width="96" height="96" fill="#808080"/>
<rect x="738" y="298" width="96" height="96" fill="#c0c0c0"/>
<rect x="258" y="394" width="96" height="96" fill="#c0c0c0"/>
<rect x="354" y="394" width="96" height="96" fill="#808080"/>
<rect x="450" y="394" width="96" height="96" fill="#c0c0c0"/>
<rect x="546" y="394" width="96" height="96" fill="#808080"/>
<rect x="642" y="394" width="96" height="96" fill="#c0c0c0"/>
<rect x="738" y="394" width="96" height="96" fill="#808080"/>
<rect x="408" y="250" width="42" height="6" fill="#5c3c4c"/>
<rect x="402" y="256" width="6" height="6" fill="#5c3c4c"/>
<rect x="408" y="256" width="24" height="6" fill="#ffffff"/>
<rect x="432" y="256" width="6" height="6" fill="#eeecea"/>
<rect x="438" y="256" width="12" height="6" fill="#e0d9d5"/>
<rect x="450" y="256" width="6" height="6" fill="#5c3c4c"/>
<rect x="396" y="262" width="6" height="6" fill="#5c3c4c"/>
<rect x="402" y="262" width="42" height="6" fill="#ffffff"/>
<rect x="444" y="262" width="12" height="6" fill="#e0d9d5"/>
<rect x="456" y="262" width="6" height="6" fill="#5c3c4c"/>
<rect x="390" y="268" width="6" height="6" fill="#5c3c4c"/>
<rect x="396" y="268" width="54" height="6" fill="#ffffff"/>
<rect x="450" y="268" width="12" height="6" fill="#e0d9d5"/>
<rect x="462" y="268" width="6" height="6" fill="#5c3c4c"/>
<rect x="390" y="274" width="6" height="6" fill="#5c3c4c"/>
<rect x="396" y="274" width="54" height="6" fill="#ffffff"/>
<rect x="450" y="274" width="18" height="6" fill="#e0d9d5"/>
<rect x="468" y="274" width="6" height="6" fill="#5c3c4c"/>
<rect x="390" y="280" width="6" height="6" fill="#5c3c4c"/>
<rect x="396" y="280" width="6" height="6" fill="#000000"/>
<rect x="402" y="280" width="36" height="6" fill="#ffffff"/>
<rect x="438" y="280" width="6" height="6" fill="#000000"/>
<rect x="444" y="280" width="12" height="6" fill="#ffffff"/>
<rect x="456" y="280" width="12" height="6" fill="#e0d9d5"/>
<rect x="468" y="280" width="6" height="6" fill="#5c3c4c"/>
<rect x="390" y="286" width="6" height="6" fill="#5c3c4c"/>
<rect x="396" y="286" width="6" height="6" fill="#ffffff"/>
<rect x="402" y="286" width="6" height="6" fill="#b86f6f"/>
<rect x="408" y="286" width="6" height="6" fill="#d87d7d"/>
<rect x="414" y="286" width="6" height="6" fill="#b86f6f"/>
<rect x="420" y="286" width="36" height="6" fill="#ffffff"/>
<rect x="456" y="286" width="18" height="6" fill="#e0d9d5"/>
<rect x="474" y="286" width="6" height="6" fill="#5c3c4c"/>
<rect x="384" y="292" width="6" height="6" fill="#5c3c4c"/>
<rect x="390" y="292" width="12" height="6" fill="#ffffff"/>
<rect x="402" y="292" width="12" height="6" fill="#d29d73"/>
<rect x="414" y="292" width="6" height="6" fill="#c8916f"/>
<rect x="420" y="292" width="36" height="6" fill="#ffffff"/>
<rect x="456" y="292" width="18" height="6" fill="#e0d9d5"/>
<rect x="474" y="292" width="6" height="6" fill="#5c3c4c"/>
<rect x="384" y="298" width="6" height="6" fill="#5c3c4c"/>
<rect x="390" y="298" width="12" height="6" fill="#ffffff"/>
<rect x="402" y="298" width="6" height="6" fill="#c8916f"/>
<rect x="408" y="298" width="6" height="6" fill="#d29d73"/>
<rect x="414" y="298" width="42" height="6" fill="#ffffff"/>
<rect x="456" y="298" width="6" height="6" fill="#eeecea"/>
<rect x="462" y="298" width="18" height="6" fill="#e0d9d5"/>
<rect x="480" y="298" width="6" height="6" fill="#5c3c4c"/>
<rect x="384" y="304" width="6" height="6" fill="#5c3c4c"/>
<rect x="390" y="304" width="12" height="6" fill="#ffffff"/>
<rect x="402" y="304" width="6" height="6" fill="#eeecea"/>
<rect x="408" y="304" width="6" height="6" fill="#c8916f"/>
<rect x="414" y="304" width="36" height="6" fill="#ffffff"/>
<rect x="450" y="304" width="6" height="6" fill="#eeecea"/>
<rect x="456" y="304" width="24" height="6" fill="#e0d9d5"/>
<rect x="480" y="304" width="6" height="6" fill="#5c3c4c"/>
<rect x="384" y="310" width="6" height="6" fill="#5c3c4c"/>
<rect x="390" y="310" width="6" height="6" fill="#eeecea"/>
<rect x="396" y="310" width="36" height="6" fill="#ffffff"/>
<rect x="432" y="310" width="6" height="6" fill="#eeecea"/>
<rect x="438" y="310" width="12" height="6" fill="#8fa6db"/>
<rect x="450" y="310" width="30" height="6" fill="#e0d9d5"/>
<rect x="480" y="310" width="6" height="6" fill="#5c3c4c"/>
<rect x="390" y="316" width="6" height="6" fill="#5c3c4c"/>
<rect x="396" y="316" width="6" height="6" fill="#e0d9d5"/>
<rect x="402" y="316" width="24" height="6" fill="#eeecea"/>
<rect x="426" y="316" width="24" height="6" fill="#8fa6db"/>
<rect x="450" y="316" width="6" height="6" fill="#7089c0"/>
<rect x="456" y="316" width="6" height="6" fill="#9a9da2"/>
<rect x="462" y="316" width="6" height="6" fill="#a9adb8"/>
<rect x="468" y="316" width="12" height="6" fill="#9a9da2"/>
<rect x="480" y="316" width="6" height="6" fill="#a9adb8"/>
<rect x="486" y="316" width="6" height="6" fill="#5c3c4c"/>
<rect x="390" y="322" width="6" height="6" fill="#5c3c4c"/>
<rect x="396" y="322" width="54" height="6" fill="#8fa6db"/>
<rect x="450" y="322" width="6" height="6" fill="#7089c0"/>
<rect x="456" y="322" width="6" height="6" fill="#9a9da2"/>
<rect x="462" y="322" width="12" height="6" fill="#e0e4f0"/>
<rect x="474" y="322" width="6" height="6" fill="#9a9da2"/>
<rect x="480" y="322" width="6" height="6" fill="#e0e4f0"/>
<rect x="486" y="322" width="6" height="6" fill="#5c3c4c"/>
<rect x="390" y="328" width="6" height="6" fill="#5c3c4c"/>
<rect x="396" y="328" width="54" height="6" fill="#8fa6db"/>
<rect x="450" y="328" width="12" height="6" fill="#7089c0"/>
<rect x="462" y="328" width="12" height="6" fill="#9a9da2"/>
<rect x="474" y="328" width="6" height="6" fill="#a9adb8"/>
<rect x="480" y="328" width="12" height="6" fill="#9a9da2"/>
<rect x="492" y="328" width="6" height="6" fill="#5c3c4c"/>
<rect x="390" y="334" width="6" height="6" fill="#5c3c4c"/>
<rect x="396" y="334" width="60" height="6" fill="#8fa6db"/>
<rect x="456" y="334" width="6" height="6" fill="#7089c0"/>
<rect x="462" y="334" width="6" height="6" fill="#e0e4f0"/>
<rect x="468" y="334" width="6" height="6" fill="#9a9da2"/>
<rect x="474" y="334" width="12" height="6" fill="#e0e4f0"/>
<rect x="486" y="334" width="6" height="6" fill="#9a9da2"/>
<rect x="492" y="334" width="6" height="6" fill="#5c3c4c"/>
<rect x="390" y="340" width="6" height="6" fill="#5c3c4c"/>
<rect x="396" y="340" width="60" height="6" fill="#8fa6db"/>
<rect x="456" y="340" width="12" height="6" fill="#7089c0"/>
<rect x="468" y="340" width="6" height="6" fill="#a9adb8"/>
<rect x="474" y="340" width="12" height="6" fill="#9a9da2"/>
<rect x="486" y="340" width="6" height="6" fill="#a9adb8"/>
<rect x="492" y="340" width="6" height="6" fill="#5c3c4c"/>
<rect x="396" y="346" width="6" height="6" fill="#5c3c4c"/>
<rect x="402" y="346" width="60" height="6" fill="#8fa6db"/>
<rect x="462" y="346" width="6" height="6" fill="#7089c0"/>
<rect x="468" y="346" width="12" height="6" fill="#e0e4f0"/>
<rect x="480" y="346" width="6" height="6" fill="#9a9da2"/>
<rect x="486" y="346" width="6" height="6" fill="#e0e4f0"/>
<rect x="492" y="346" width="6" height="6" fill="#7089c0"/>
<rect x="498" y="346" width="6" height="6" fill="#5c3c4c"/>
<rect x="402" y="352" width="6" height="6" fill="#5c3c4c"/>
<rect x="408" y="352" width="60" height="6" fill="#8fa6db"/>
<rect x="468" y="352" width="6" height="6" fill="#7089c0"/>
<rect x="474" y="352" width="6" height="6" fill="#9a9da2"/>
<rect x="480" y="352" width="6" height="6" fill="#e0e4f0"/>
<rect x="486" y="352" width="6" height="6" fill="#9a9da2"/>
<rect x="492" y="352" width="6" height="6" fill="#7089c0"/>
<rect x="498" y="352" width="24" height="6" fill="#5c3c4c"/>
<rect x="408" y="358" width="12" height="6" fill="#5c3c4c"/>
<rect x="420" y="358" width="54" height="6" fill="#8fa6db"/>
<rect x="474" y="358" width="48" height="6" fill="#7089c0"/>
<rect x="522" y="358" width="6" height="6" fill="#5c3c4c"/>
<rect x="420" y="364" width="102" height="6" fill="#5c3c4c"/>
<rect x="420" y="370" width="6" height="6" fill="#5c3c4c"/>
<rect x="426" y="370" width="6" height="6" fill="#d29d73"/>
<rect x="432" y="370" width="6" height="6" fill="#5c3c4c"/>
<rect x="456" y="370" width="6" height="6" fill="#5c3c4c"/>
<rect x="462" y="370" width="6" height="6" fill="#d29d73"/>
<rect x="468" y="370" width="6" height="6" fill="#5c3c4c"/>
<rect x="414" y="376" width="6" height="6" fill="#5c3c4c"/>
<rect x="420" y="376" width="6" height="6" fill="#d29d73"/>
<rect x="426" y="376" width="6" height="6" fill="#5c3c4c"/>
<rect x="432" y="376" width="6" height="6" fill="#d29d73"/>
<rect x="438" y="376" width="6" height="6" fill="#5c3c4c"/>
<rect x="450" y="376" width="6" height="6" fill="#5c3c4c"/>
<rect x="456" y="376" width="6" height="6" fill="#d29d73"/>
<rect x="462" y="376" width="6" height="6" fill="#5c3c4c"/>
<rect x="468" y="376" width="6" height="6" fill="#d29d73"/>
<rect x="474" y="376" width="6" height="6" fill="#5c3c4c"/>
<rect x="414" y="382" width="30" height="6" fill="#5c3c4c"/>
<rect x="450" y="382" width="30" height="6" fill="#5c3c4c"/>
<rect x="600" y="250" width="42" height="6" fill="#5c3c4c"/>
<rect x="594" y="256" width="6" height="6" fill="#5c3c4c"/>
<rect x="600" y="256" width="6" height="6" fill="#e6eaf3"/>
<rect x="606" y="256" width="18" height="6" fill="#ffffff"/>
<rect x="624" y="256" width="6" height="6" fill="#e6eaf3"/>
<rect x="630" y="256" width="6" height="6" fill="#dde1ec"/>
<rect x="636" y="256" width="6" height="6" fill="#a9adb8"/>
<rect x="642" y="256" width="6" height="6" fill="#5c3c4c"/>
<rect x="588" y="262" width="6" height="6" fill="#5c3c4c"/>
<rect x="594" y="262" width="36" height="6" fill="#ffffff"/>
<rect x="630" y="262" width="6" height="6" fill="#c2c5cf"/>
<rect x="636" y="262" width="6" height="6" fill="#dde1ec"/>
<rect x="642" y="262" width="6" height="6" fill="#a9adb8"/>
<rect x="648" y="262" width="6" height="6" fill="#5c3c4c"/>
<rect x="582" y="268" width="6" height="6" fill="#5c3c4c"/>
<rect x="588" y="268" width="48" height="6" fill="#ffffff"/>
<rect x="636" y="268" width="6" height="6" fill="#e6eaf3"/>
<rect x="642" y="268" width="6" height="6" fill="#dde1ec"/>
<rect x="648" y="268" width="6" height="6" fill="#9a9da2"/>
<rect x="654" y="268" width="6" height="6" fill="#5c3c4c"/>
<rect x="582" y="274" width="6" height="6" fill="#5c3c4c"/>
<rect x="588" y="274" width="54" height="6" fill="#ffffff"/>
<rect x="642" y="274" width="6" height="6" fill="#c2c5cf"/>
<rect x="648" y="274" width="6" height="6" fill="#e6eaf3"/>
<rect x="654" y="274" width="6" height="6" fill="#9a9da2"/>
<rect x="660" y="274" width="6" height="6" fill="#5c3c4c"/>
<rect x="582" y="280" width="6" height="6" fill="#5c3c4c"/>
<rect x="588" y="280" width="6" height="6" fill="#000000"/>
<rect x="594" y="280" width="36" height="6" fill="#ffffff"/>
<rect x="630" y="280" width="6" height="6" fill="#000000"/>
<rect x="636" y="280" width="6" height="6" fill="#ffffff"/>
<rect x="642" y="280" width="6" height="6" fill="#dde1ec"/>
<rect x="648" y="280" width="6" height="6" fill="#c2c5cf"/>
<rect x="654" y="280" width="6" height="6" fill="#e6eaf3"/>
<rect x="660" y="280" width="6" height="6" fill="#5c3c4c"/>
<rect x="582" y="286" width="6" height="6" fill="#5c3c4c"/>
<rect x="588" y="286" width="6" height="6" fill="#ffffff"/>
<rect x="594" y="286" width="6" height="6" fill="#b86f6f"/>
<rect x="600" y="286" width="6" height="6" fill="#d87d7d"/>
<rect x="606" y="286" width="6" height="6" fill="#b86f6f"/>
<rect x="612" y="286" width="36" height="6" fill="#ffffff"/>
<rect x="648" y="286" width="6" height="6" fill="#e6eaf3"/>
<rect x="654" y="286" width="6" height="6" fill="#9a9da2"/>
<rect x="660" y="286" width="6" height="6" fill="#e6eaf3"/>
<rect x="666" y="286" width="6" height="6" fill="#5c3c4c"/>
<rect x="576" y="292" width="6" height="6" fill="#5c3c4c"/>
<rect x="582" y="292" width="12" height="6" fill="#ffffff"/>
<rect x="594" y="292" width="12" height="6" fill="#d29d73"/>
<rect x="606" y="292" width="6" height="6" fill="#c8916f"/>
<rect x="612" y="292" width="36" height="6" fill="#ffffff"/>
<rect x="648" y="292" width="6" height="6" fill="#c2c5cf"/>
<rect x="654" y="292" width="6" height="6" fill="#e6eaf3"/>
<rect x="660" y="292" width="6" height="6" fill="#a9adb8"/>
<rect x="666" y="292" width="6" height="6" fill="#e6eaf3"/>
<rect x="672" y="292" width="6" height="6" fill="#5c3c4c"/>
<rect x="576" y="298" width="6" height="6" fill="#5c3c4c"/>
<rect x="582" y="298" width="12" height="6" fill="#ffffff"/>
<rect x="594" y="298" width="6" height="6" fill="#c8916f"/>
<rect x="600" y="298" width="6" height="6" fill="#d29d73"/>
<rect x="606" y="298" width="42" height="6" fill="#ffffff"/>
<rect x="648" y="298" width="6" height="6" fill="#a9adb8"/>
<rect x="654" y="298" width="6" height="6" fill="#e6eaf3"/>
<rect x="660" y="298" width="6" height="6" fill="#9a9da2"/>
<rect x="666" y="298" width="6" height="6" fill="#e6eaf3"/>
<rect x="672" y="298" width="6" height="6" fill="#5c3c4c"/>
<rect x="576" y="304" width="6" height="6" fill="#5c3c4c"/>
<rect x="582" y="304" width="12" height="6" fill="#ffffff"/>
<rect x="594" y="304" width="6" height="6" fill="#eeecea"/>
<rect x="600" y="304" width="6" height="6" fill="#c8916f"/>
<rect x="606" y="304" width="36" height="6" fill="#ffffff"/>
<rect x="642" y="304" width="12" height="6" fill="#e6eaf3"/>
<rect x="654" y="304" width="6" height="6" fill="#9a9da2"/>
<rect x="660" y="304" width="6" height="6" fill="#e6eaf3"/>
<rect x="666" y="304" width="6" height="6" fill="#5c3c4c"/>
<rect x="576" y="310" width="6" height="6" fill="#5c3c4c"/>
<rect x="582" y="310" width="6" height="6" fill="#eeecea"/>
<rect x="588" y="310" width="36" height="6" fill="#ffffff"/>
<rect x="624" y="310" width="6" height="6" fill="#e6eaf3"/>
<rect x="630" y="310" width="12" height="6" fill="#a8b8e8"/>
<rect x="642" y="310" width="6" height="6" fill="#8fa6db"/>
<rect x="648" y="310" width="6" height="6" fill="#7089c0"/>
<rect x="654" y="310" width="18" height="6" fill="#221b21"/>
<rect x="672" y="310" width="6" height="6" fill="#5c3c4c"/>
<rect x="582" y="316" width="6" height="6" fill="#5c3c4c"/>
<rect x="588" y="316" width="6" height="6" fill="#e0d9d5"/>
<rect x="594" y="316" width="24" height="6" fill="#eeecea"/>
<rect x="618" y="316" width="6" height="6" fill="#dde1ec"/>
<rect x="624" y="316" width="12" height="6" fill="#8fa6db"/>
<rect x="636" y="316" width="6" height="6" fill="#7089c0"/>
<rect x="642" y="316" width="36" height="6" fill="#221b21"/>
<rect x="678" y="316" width="6" height="6" fill="#5c3c4c"/>
<rect x="582" y="322" width="12" height="6" fill="#5c3c4c"/>
<rect x="594" y="322" width="6" height="6" fill="#8fa6db"/>
<rect x="600" y="322" width="12" height="6" fill="#a8b8e8"/>
<rect x="612" y="322" width="6" height="6" fill="#8fa6db"/>
<rect x="618" y="322" width="6" height="6" fill="#7089c0"/>
<rect x="624" y="322" width="42" height="6" fill="#221b21"/>
<rect x="666" y="322" width="12" height="6" fill="#1a141a"/>
<rect x="678" y="322" width="6" height="6" fill="#5c3c4c"/>
<rect x="588" y="328" width="6" height="6" fill="#5c3c4c"/>
<rect x="594" y="328" width="6" height="6" fill="#221b21"/>
<rect x="600" y="328" width="6" height="6" fill="#873d3d"/>
<rect x="606" y="328" width="6" height="6" fill="#6e2e2e"/>
<rect x="612" y="328" width="48" height="6" fill="#221b21"/>
<rect x="660" y="328" width="6" height="6" fill="#1a141a"/>
<rect x="666" y="328" width="6" height="6" fill="#a9adb8"/>
<rect x="672" y="328" width="12" height="6" fill="#9a9da2"/>
<rect x="684" y="328" width="6" height="6" fill="#5c3c4c"/>
<rect x="588" y="334" width="6" height="6" fill="#5c3c4c"/>
<rect x="594" y="334" width="6" height="6" fill="#221b21"/>
<rect x="600" y="334" width="12" height="6" fill="#5a2528"/>
<rect x="612" y="334" width="42" height="6" fill="#221b21"/>
<rect x="654" y="334" width="6" height="6" fill="#1a141a"/>
<rect x="660" y="334" width="6" height="6" fill="#9a9da2"/>
<rect x="666" y="334" width="12" height="6" fill="#e0e4f0"/>
<rect x="678" y="334" width="6" height="6" fill="#9a9da2"/>
<rect x="684" y="334" width="6" height="6" fill="#e0e4f0"/>
<rect x="690" y="334" width="6" height="6" fill="#5c3c4c"/>
<rect x="588" y="340" width="6" height="6" fill="#5c3c4c"/>
<rect x="594" y="340" width="6" height="6" fill="#2e262b"/>
<rect x="600" y="340" width="6" height="6" fill="#6e2e2e"/>
<rect x="606" y="340" width="6" height="6" fill="#873d3d"/>
<rect x="612" y="340" width="12" height="6" fill="#2e262b"/>
<rect x="624" y="340" width="24" height="6" fill="#221b21"/>
<rect x="648" y="340" width="12" height="6" fill="#1a141a"/>
<rect x="660" y="340" width="6" height="6" fill="#a9adb8"/>
<rect x="666" y="340" width="12" height="6" fill="#9a9da2"/>
<rect x="678" y="340" width="6" height="6" fill="#a9adb8"/>
<rect x="684" y="340" width="6" height="6" fill="#9a9da2"/>
<rect x="690" y="340" width="6" height="6" fill="#5c3c4c"/>
<rect x="582" y="346" width="6" height="6" fill="#5c3c4c"/>
<rect x="588" y="346" width="6" height="6" fill="#2e262b"/>
<rect x="594" y="346" width="6" height="6" fill="#3a3338"/>
<rect x="600" y="346" width="6" height="6" fill="#6e2e2e"/>
<rect x="606" y="346" width="6" height="6" fill="#873d3d"/>
<rect x="612" y="346" width="12" height="6" fill="#3a3338"/>
<rect x="624" y="346" width="12" height="6" fill="#2e262b"/>
<rect x="636" y="346" width="12" height="6" fill="#221b21"/>
<rect x="648" y="346" width="12" height="6" fill="#1a141a"/>
<rect x="660" y="346" width="12" height="6" fill="#e0e4f0"/>
<rect x="672" y="346" width="6" height="6" fill="#9a9da2"/>
<rect x="678" y="346" width="12" height="6" fill="#e0e4f0"/>
<rect x="690" y="346" width="6" height="6" fill="#5c3c4c"/>
<rect x="582" y="352" width="6" height="6" fill="#5c3c4c"/>
<rect x="588" y="352" width="6" height="6" fill="#2e262b"/>
<rect x="594" y="352" width="6" height="6" fill="#484246"/>
<rect x="600" y="352" width="12" height="6" fill="#873d3d"/>
<rect x="612" y="352" width="6" height="6" fill="#484246"/>
<rect x="618" y="352" width="6" height="6" fill="#3a3338"/>
<rect x="624" y="352" width="12" height="6" fill="#2e262b"/>
<rect x="636" y="352" width="12" height="6" fill="#221b21"/>
<rect x="648" y="352" width="18" height="6" fill="#1a141a"/>
<rect x="666" y="352" width="6" height="6" fill="#9a9da2"/>
<rect x="672" y="352" width="6" height="6" fill="#e0e4f0"/>
<rect x="678" y="352" width="12" height="6" fill="#9a9da2"/>
<rect x="690" y="352" width="6" height="6" fill="#7089c0"/>
<rect x="696" y="352" width="18" height="6" fill="#5c3c4c"/>
<rect x="582" y="358" width="6" height="6" fill="#5c3c4c"/>
<rect x="588" y="358" width="6" height="6" fill="#2e262b"/>
<rect x="594" y="358" width="6" height="6" fill="#3a3338"/>
<rect x="600" y="358" width="12" height="6" fill="#873d3d"/>
<rect x="612" y="358" width="6" height="6" fill="#3a3338"/>
<rect x="618" y="358" width="18" height="6" fill="#2e262b"/>
<rect x="636" y="358" width="6" height="6" fill="#221b21"/>
<rect x="642" y="358" width="30" height="6" fill="#1a141a"/>
<rect x="672" y="358" width="24" height="6" fill="#7089c0"/>
<rect x="696" y="358" width="18" height="6" fill="#8fa6db"/>
<rect x="714" y="358" width="6" height="6" fill="#5c3c4c"/>
<rect x="588" y="364" width="6" height="6" fill="#5c3c4c"/>
<rect x="594" y="364" width="6" height="6" fill="#2e262b"/>
<rect x="600" y="364" width="6" height="6" fill="#873d3d"/>
<rect x="606" y="364" width="18" height="6" fill="#2e262b"/>
<rect x="624" y="364" width="18" height="6" fill="#221b21"/>
<rect x="642" y="364" width="72" height="6" fill="#5c3c4c"/>
<rect x="594" y="370" width="48" height="6" fill="#5c3c4c"/>
<rect x="648" y="370" width="6" height="6" fill="#5c3c4c"/>
<rect x="654" y="370" width="6" height="6" fill="#d29d73"/>
<rect x="660" y="370" width="6" height="6" fill="#5c3c4c"/>
<rect x="600" y="376" width="6" height="6" fill="#5c3c4c"/>
<rect x="606" y="376" width="6" height="6" fill="#d29d73"/>
<rect x="612" y="376" width="6" height="6" fill="#5c3c4c"/>
<rect x="618" y="376" width="6" height="6" fill="#d29d73"/>
<rect x="624" y="376" width="6" height="6" fill="#5c3c4c"/>
<rect x="642" y="376" width="6" height="6" fill="#5c3c4c"/>
<rect x="648" y="376" width="6" height="6" fill="#d29d73"/>
<rect x="654" y="376" width="6" height="6" fill="#5c3c4c"/>
<rect x="660" y="376" width="6" height="6" fill="#d29d73"/>
<rect x="666" y="376" width="6" height="6" fill="#5c3c4c"/>
<rect x="600" y="382" width="30" height="6" fill="#5c3c4c"/>
<rect x="642" y="382" width="30" height="6" fill="#5c3c4c"/>
<rect x="994" y="46" width="2" height="360" fill="#000"/>
<rect x="996" y="44" width="30" height="2" fill="#000"/>
<rect x="996" y="46" width="30" height="28" fill="#fff"/>
<rect x="996" y="72" width="2" height="2" fill="#c09070"/>
<rect x="994" y="74" width="30" height="2" fill="#000"/>
<rect x="996" y="76" width="30" height="28" fill="#fff"/>
<rect x="998" y="78" width="30" height="24" fill="#c6c6c6"/>
<rect x="994" y="104" width="30" height="2" fill="#000"/>
<rect x="996" y="106" width="30" height="28" fill="#fff"/>
<rect x="998" y="108" width="30" height="24" fill="#c6c6c6"/>
<rect x="994" y="134" width="30" height="2" fill="#000"/>
<rect x="996" y="136" width="30" height="28" fill="#fff"/>
<rect x="998" y="138" width="30" height="24" fill="#c6c6c6"/>
<rect x="994" y="164" width="30" height="2" fill="#000"/>
<rect x="996" y="166" width="30" height="28" fill="#fff"/>
<rect x="998" y="168" width="30" height="24" fill="#c6c6c6"/>
<rect x="994" y="194" width="30" height="2" fill="#000"/>
<rect x="996" y="196" width="30" height="28" fill="#fff"/>
<rect x="998" y="198" width="30" height="24" fill="#c6c6c6"/>
<rect x="994" y="224" width="30" height="2" fill="#000"/>
<rect x="996" y="226" width="30" height="28" fill="#fff"/>
<rect x="998" y="228" width="30" height="24" fill="#c6c6c6"/>
<rect x="994" y="254" width="30" height="2" fill="#000"/>
<rect x="996" y="256" width="30" height="28" fill="#fff"/>
<rect x="998" y="258" width="30" height="24" fill="#c6c6c6"/>
<rect x="994" y="284" width="30" height="2" fill="#000"/>
<rect x="996" y="286" width="30" height="28" fill="#fff"/>
<rect x="998" y="288" width="30" height="24" fill="#c6c6c6"/>
<rect x="994" y="314" width="30" height="2" fill="#000"/>
<rect x="996" y="316" width="30" height="28" fill="#fff"/>
<rect x="998" y="318" width="30" height="24" fill="#c6c6c6"/>
<rect x="994" y="344" width="30" height="2" fill="#000"/>
<rect x="996" y="346" width="30" height="28" fill="#fff"/>
<rect x="998" y="348" width="30" height="24" fill="#c6c6c6"/>
<rect x="994" y="374" width="30" height="2" fill="#000"/>
<rect x="996" y="376" width="30" height="28" fill="#fff"/>
<rect x="998" y="378" width="30" height="24" fill="#c6c6c6"/>
<rect x="1000" y="50" width="6" height="2" fill="#000"/>
<rect x="1008" y="50" width="4" height="2" fill="#000"/>
<rect x="1014" y="50" width="6" height="2" fill="#000"/>
<rect x="1000" y="52" width="2" height="2" fill="#000"/>
<rect x="1018" y="52" width="2" height="2" fill="#000"/>
<rect x="1000" y="58" width="2" height="2" fill="#000"/>
<rect x="1018" y="58" width="2" height="2" fill="#000"/>
<rect x="1000" y="60" width="2" height="2" fill="#000"/>
<rect x="1018" y="60" width="2" height="2" fill="#000"/>
<rect x="1000" y="64" width="2" height="2" fill="#000"/>
<rect x="1018" y="64" width="2" height="2" fill="#000"/>
<rect x="1000" y="66" width="2" height="2" fill="#000"/>
<rect x="1018" y="66" width="2" height="2" fill="#000"/>
<rect x="1000" y="68" width="6" height="2" fill="#000"/>
<rect x="1008" y="68" width="4" height="2" fill="#000"/>
<rect x="1014" y="68" width="6" height="2" fill="#000"/>
<rect x="1012" y="80" width="4" height="2" fill="#000"/>
<rect x="1010" y="82" width="2" height="2" fill="#000"/>
<rect x="1012" y="82" width="4" height="2" fill="#fff"/>
<rect x="1016" y="82" width="2" height="2" fill="#000"/>
<rect x="1008" y="84" width="2" height="2" fill="#000"/>
<rect x="1010" y="84" width="4" height="2" fill="#fff"/>
<rect x="1014" y="84" width="2" height="2" fill="#000"/>
<rect x="1016" y="84" width="2" height="2" fill="#808080"/>
<rect x="1018" y="84" width="2" height="2" fill="#000"/>
<rect x="1006" y="86" width="2" height="2" fill="#000"/>
<rect x="1008" y="86" width="4" height="2" fill="#fff"/>
<rect x="1012" y="86" width="2" height="2" fill="#000"/>
<rect x="1014" y="86" width="2" height="2" fill="#808080"/>
<rect x="1016" y="86" width="4" height="2" fill="#000"/>
<rect x="1004" y="88" width="2" height="2" fill="#000"/>
<rect x="1006" y="88" width="4" height="2" fill="#fff"/>
<rect x="1010" y="88" width="2" height="2" fill="#000"/>
<rect x="1012" y="88" width="2" height="2" fill="#808080"/>
<rect x="1014" y="88" width="4" height="2" fill="#000"/>
<rect x="1002" y="90" width="2" height="2" fill="#000"/>
<rect x="1004" y="90" width="4" height="2" fill="#fff"/>
<rect x="1008" y="90" width="2" height="2" fill="#000"/>
<rect x="1010" y="90" width="2" height="2" fill="#808080"/>
<rect x="1012" y="90" width="4" height="2" fill="#000"/>
<rect x="1000" y="92" width="2" height="2" fill="#000"/>
<rect x="1002" y="92" width="4" height="2" fill="#fff"/>
<rect x="1006" y="92" width="2" height="2" fill="#000"/>
<rect x="1008" y="92" width="2" height="2" fill="#808080"/>
<rect x="1010" y="92" width="4" height="2" fill="#000"/>
<rect x="1000" y="94" width="2" height="2" fill="#000"/>
<rect x="1002" y="94" width="2" height="2" fill="#fff"/>
<rect x="1004" y="94" width="4" height="2" fill="#dcdcdc"/>
<rect x="1008" y="94" width="4" height="2" fill="#000"/>
<rect x="1000" y="96" width="4" height="2" fill="#000"/>
<rect x="1004" y="96" width="4" height="2" fill="#808080"/>
<rect x="1008" y="96" width="2" height="2" fill="#000"/>
<rect x="1000" y="98" width="8" height="2" fill="#000"/>
<rect x="1008" y="112" width="10" height="2" fill="#000"/>
<rect x="1018" y="112" width="2" height="2" fill="#5a5a5a"/>
<rect x="1006" y="114" width="2" height="2" fill="#000"/>
<rect x="1008" y="114" width="8" height="2" fill="#fff"/>
<rect x="1016" y="114" width="2" height="2" fill="#dcdcdc"/>
<rect x="1018" y="114" width="2" height="2" fill="#000"/>
<rect x="1004" y="116" width="2" height="2" fill="#000"/>
<rect x="1006" y="116" width="8" height="2" fill="#fff"/>
<rect x="1014" y="116" width="4" height="2" fill="#a0a0a0"/>
<rect x="1018" y="116" width="2" height="2" fill="#000"/>
<rect x="1002" y="118" width="2" height="2" fill="#000"/>
<rect x="1004" y="118" width="8" height="2" fill="#fff"/>
<rect x="1012" y="118" width="4" height="2" fill="#a0a0a0"/>
<rect x="1016" y="118" width="2" height="2" fill="#808080"/>
<rect x="1018" y="118" width="2" height="2" fill="#000"/>
<rect x="1000" y="120" width="2" height="2" fill="#000"/>
<rect x="1002" y="120" width="8" height="2" fill="#fff"/>
<rect x="1010" y="120" width="2" height="2" fill="#dcdcdc"/>
<rect x="1012" y="120" width="4" height="2" fill="#808080"/>
<rect x="1016" y="120" width="2" height="2" fill="#000"/>
<rect x="1018" y="120" width="2" height="2" fill="#aaaaaa"/>
<rect x="1000" y="122" width="2" height="2" fill="#000"/>
<rect x="1002" y="122" width="10" height="2" fill="#dcdcdc"/>
<rect x="1012" y="122" width="2" height="2" fill="#808080"/>
<rect x="1014" y="122" width="2" height="2" fill="#000"/>
<rect x="1016" y="122" width="2" height="2" fill="#aaaaaa"/>
<rect x="1000" y="124" width="2" height="2" fill="#000"/>
<rect x="1002" y="124" width="10" height="2" fill="#dcdcdc"/>
<rect x="1012" y="124" width="2" height="2" fill="#000"/>
<rect x="1014" y="124" width="2" height="2" fill="#aaaaaa"/>
<rect x="1000" y="126" width="2" height="2" fill="#aaaaaa"/>
<rect x="1002" y="126" width="10" height="2" fill="#000"/>
<rect x="1012" y="126" width="2" height="2" fill="#aaaaaa"/>
<rect x="1016" y="138" width="4" height="2" fill="#000"/>
<rect x="1014" y="140" width="2" height="2" fill="#000"/>
<rect x="1016" y="140" width="2" height="2" fill="#fff"/>
<rect x="1018" y="140" width="4" height="2" fill="#000"/>
<rect x="1008" y="142" width="2" height="2" fill="#000"/>
<rect x="1010" y="142" width="2" height="2" fill="#808080"/>
<rect x="1012" y="142" width="2" height="2" fill="#000"/>
<rect x="1014" y="142" width="2" height="2" fill="#808080"/>
<rect x="1016" y="142" width="6" height="2" fill="#000"/>
<rect x="1010" y="144" width="2" height="2" fill="#000"/>
<rect x="1012" y="144" width="2" height="2" fill="#fff"/>
<rect x="1014" y="144" width="6" height="2" fill="#000"/>
<rect x="1008" y="146" width="2" height="2" fill="#000"/>
<rect x="1010" y="146" width="2" height="2" fill="#fff"/>
<rect x="1012" y="146" width="6" height="2" fill="#000"/>
<rect x="1006" y="148" width="2" height="2" fill="#000"/>
<rect x="1008" y="148" width="2" height="2" fill="#fff"/>
<rect x="1010" y="148" width="2" height="2" fill="#a0a0a0"/>
<rect x="1012" y="148" width="2" height="2" fill="#fff"/>
<rect x="1014" y="148" width="2" height="2" fill="#000"/>
<rect x="1016" y="148" width="2" height="2" fill="#808080"/>
<rect x="1004" y="150" width="2" height="2" fill="#000"/>
<rect x="1006" y="150" width="2" height="2" fill="#fff"/>
<rect x="1008" y="150" width="2" height="2" fill="#a0a0a0"/>
<rect x="1010" y="150" width="2" height="2" fill="#fff"/>
<rect x="1012" y="150" width="2" height="2" fill="#000"/>
<rect x="1014" y="150" width="2" height="2" fill="#808080"/>
<rect x="1016" y="150" width="2" height="2" fill="#000"/>
<rect x="1002" y="152" width="2" height="2" fill="#000"/>
<rect x="1004" y="152" width="2" height="2" fill="#fff"/>
<rect x="1006" y="152" width="2" height="2" fill="#a0a0a0"/>
<rect x="1008" y="152" width="2" height="2" fill="#fff"/>
<rect x="1010" y="152" width="2" height="2" fill="#000"/>
<rect x="1012" y="152" width="2" height="2" fill="#808080"/>
<rect x="1002" y="154" width="2" height="2" fill="#000"/>
<rect x="1004" y="154" width="2" height="2" fill="#a0a0a0"/>
<rect x="1006" y="154" width="2" height="2" fill="#fff"/>
<rect x="1008" y="154" width="2" height="2" fill="#000"/>
<rect x="1010" y="154" width="2" height="2" fill="#808080"/>
<rect x="1000" y="156" width="2" height="2" fill="#000"/>
<rect x="1002" y="156" width="2" height="2" fill="#fff"/>
<rect x="1004" y="156" width="4" height="2" fill="#000"/>
<rect x="1008" y="156" width="2" height="2" fill="#808080"/>
<rect x="1000" y="158" width="4" height="2" fill="#000"/>
<rect x="1004" y="158" width="2" height="2" fill="#808080"/>
<rect x="1002" y="170" width="2" height="2" fill="#808080"/>
<rect x="1004" y="170" width="8" height="2" fill="#000"/>
<rect x="1012" y="170" width="2" height="2" fill="#808080"/>
<rect x="1000" y="172" width="4" height="2" fill="#808080"/>
<rect x="1004" y="172" width="8" height="2" fill="#fff"/>
<rect x="1012" y="172" width="4" height="2" fill="#808080"/>
<rect x="1000" y="174" width="2" height="2" fill="#000"/>
<rect x="1002" y="174" width="6" height="2" fill="#fff"/>
<rect x="1008" y="174" width="2" height="2" fill="#5a5a5a"/>
<rect x="1010" y="174" width="2" height="2" fill="#dcdcdc"/>
<rect x="1012" y="174" width="2" height="2" fill="#fff"/>
<rect x="1014" y="174" width="2" height="2" fill="#000"/>
<rect x="1000" y="176" width="2" height="2" fill="#000"/>
<rect x="1002" y="176" width="6" height="2" fill="#fff"/>
<rect x="1008" y="176" width="2" height="2" fill="#dcdcdc"/>
<rect x="1010" y="176" width="2" height="2" fill="#808080"/>
<rect x="1012" y="176" width="2" height="2" fill="#fff"/>
<rect x="1014" y="176" width="2" height="2" fill="#000"/>
<rect x="1000" y="178" width="2" height="2" fill="#000"/>
<rect x="1002" y="178" width="2" height="2" fill="#fff"/>
<rect x="1004" y="178" width="2" height="2" fill="#5a5a5a"/>
<rect x="1006" y="178" width="4" height="2" fill="#dcdcdc"/>
<rect x="1010" y="178" width="2" height="2" fill="#808080"/>
<rect x="1012" y="178" width="2" height="2" fill="#fff"/>
<rect x="1014" y="178" width="2" height="2" fill="#000"/>
<rect x="1000" y="180" width="2" height="2" fill="#000"/>
<rect x="1002" y="180" width="4" height="2" fill="#fff"/>
<rect x="1006" y="180" width="4" height="2" fill="#808080"/>
<rect x="1010" y="180" width="2" height="2" fill="#dcdcdc"/>
<rect x="1012" y="180" width="2" height="2" fill="#fff"/>
<rect x="1014" y="180" width="2" height="2" fill="#000"/>
<rect x="1000" y="182" width="4" height="2" fill="#808080"/>
<rect x="1004" y="182" width="8" height="2" fill="#fff"/>
<rect x="1012" y="182" width="2" height="2" fill="#808080"/>
<rect x="1014" y="182" width="4" height="2" fill="#000"/>
<rect x="1002" y="184" width="2" height="2" fill="#808080"/>
<rect x="1004" y="184" width="12" height="2" fill="#000"/>
<rect x="1016" y="184" width="2" height="2" fill="#fff"/>
<rect x="1018" y="184" width="2" height="2" fill="#000"/>
<rect x="1012" y="186" width="6" height="2" fill="#000"/>
<rect x="1018" y="186" width="2" height="2" fill="#fff"/>
<rect x="1020" y="186" width="2" height="2" fill="#000"/>
<rect x="1014" y="188" width="8" height="2" fill="#000"/>
<rect x="1016" y="190" width="4" height="2" fill="#000"/>
<rect x="1020" y="190" width="2" height="2" fill="#808080"/>
<rect x="1008" y="196" width="2" height="2" fill="#000"/>
<rect x="1006" y="198" width="6" height="2" fill="#000"/>
<rect x="1004" y="200" width="4" height="2" fill="#aaaaaa"/>
<rect x="1008" y="200" width="2" height="2" fill="#000"/>
<rect x="1010" y="200" width="4" height="2" fill="#aaaaaa"/>
<rect x="1008" y="202" width="2" height="2" fill="#000"/>
<rect x="1000" y="204" width="2" height="2" fill="#000"/>
<rect x="1008" y="204" width="2" height="2" fill="#000"/>
<rect x="1016" y="204" width="2" height="2" fill="#000"/>
<rect x="998" y="206" width="4" height="2" fill="#000"/>
<rect x="1008" y="206" width="2" height="2" fill="#000"/>
<rect x="1016" y="206" width="4" height="2" fill="#000"/>
<rect x="996" y="208" width="2" height="2" fill="#aaaaaa"/>
<rect x="998" y="208" width="22" height="2" fill="#000"/>
<rect x="1020" y="208" width="2" height="2" fill="#aaaaaa"/>
<rect x="998" y="210" width="2" height="2" fill="#aaaaaa"/>
<rect x="1000" y="210" width="2" height="2" fill="#000"/>
<rect x="1008" y="210" width="2" height="2" fill="#000"/>
<rect x="1016" y="210" width="2" height="2" fill="#000"/>
<rect x="1018" y="210" width="2" height="2" fill="#aaaaaa"/>
<rect x="1000" y="212" width="2" height="2" fill="#aaaaaa"/>
<rect x="1008" y="212" width="2" height="2" fill="#000"/>
<rect x="1016" y="212" width="2" height="2" fill="#aaaaaa"/>
<rect x="1008" y="214" width="2" height="2" fill="#000"/>
<rect x="1004" y="216" width="2" height="2" fill="#aaaaaa"/>
<rect x="1006" y="216" width="6" height="2" fill="#000"/>
<rect x="1012" y="216" width="2" height="2" fill="#aaaaaa"/>
<rect x="1006" y="218" width="2" height="2" fill="#aaaaaa"/>
<rect x="1008" y="218" width="2" height="2" fill="#000"/>
<rect x="1010" y="218" width="2" height="2" fill="#aaaaaa"/>
<rect x="1008" y="220" width="2" height="2" fill="#aaaaaa"/>
<rect x="1008" y="228" width="4" height="2" fill="#000"/>
<rect x="1006" y="230" width="2" height="2" fill="#808080"/>
<rect x="1008" y="230" width="4" height="2" fill="#000"/>
<rect x="1012" y="230" width="2" height="2" fill="#808080"/>
<rect x="1006" y="232" width="8" height="2" fill="#000"/>
<rect x="1004" y="234" width="2" height="2" fill="#808080"/>
<rect x="1006" y="234" width="8" height="2" fill="#000"/>
<rect x="1014" y="234" width="2" height="2" fill="#808080"/>
<rect x="1004" y="236" width="12" height="2" fill="#000"/>
<rect x="1004" y="238" width="2" height="2" fill="#000"/>
<rect x="1006" y="238" width="2" height="2" fill="#fff"/>
<rect x="1008" y="238" width="8" height="2" fill="#000"/>
<rect x="1004" y="240" width="8" height="2" fill="#000"/>
<rect x="1012" y="240" width="2" height="2" fill="#808080"/>
<rect x="1014" y="240" width="2" height="2" fill="#000"/>
<rect x="1004" y="242" width="6" height="2" fill="#000"/>
<rect x="1010" y="242" width="2" height="2" fill="#808080"/>
<rect x="1012" y="242" width="4" height="2" fill="#000"/>
<rect x="1006" y="244" width="8" height="2" fill="#000"/>
<rect x="1006" y="248" width="8" height="2" fill="#808080"/>
<rect x="1018" y="258" width="2" height="2" fill="#aaaaaa"/>
<rect x="1016" y="260" width="2" height="2" fill="#aaaaaa"/>
<rect x="1018" y="260" width="2" height="2" fill="#000"/>
<rect x="1020" y="260" width="2" height="2" fill="#aaaaaa"/>
<rect x="1014" y="262" width="2" height="2" fill="#aaaaaa"/>
<rect x="1016" y="262" width="2" height="2" fill="#000"/>
<rect x="1018" y="262" width="2" height="2" fill="#aaaaaa"/>
<rect x="1012" y="264" width="2" height="2" fill="#aaaaaa"/>
<rect x="1014" y="264" width="2" height="2" fill="#000"/>
<rect x="1016" y="264" width="2" height="2" fill="#aaaaaa"/>
<rect x="1010" y="266" width="2" height="2" fill="#aaaaaa"/>
<rect x="1012" y="266" width="2" height="2" fill="#000"/>
<rect x="1014" y="266" width="2" height="2" fill="#aaaaaa"/>
<rect x="1008" y="268" width="2" height="2" fill="#aaaaaa"/>
<rect x="1010" y="268" width="2" height="2" fill="#000"/>
<rect x="1012" y="268" width="2" height="2" fill="#aaaaaa"/>
<rect x="1006" y="270" width="2" height="2" fill="#aaaaaa"/>
<rect x="1008" y="270" width="2" height="2" fill="#000"/>
<rect x="1010" y="270" width="2" height="2" fill="#aaaaaa"/>
<rect x="1004" y="272" width="2" height="2" fill="#aaaaaa"/>
<rect x="1006" y="272" width="2" height="2" fill="#000"/>
<rect x="1008" y="272" width="2" height="2" fill="#aaaaaa"/>
<rect x="1002" y="274" width="2" height="2" fill="#aaaaaa"/>
<rect x="1004" y="274" width="2" height="2" fill="#000"/>
<rect x="1006" y="274" width="2" height="2" fill="#aaaaaa"/>
<rect x="1000" y="276" width="2" height="2" fill="#aaaaaa"/>
<rect x="1002" y="276" width="2" height="2" fill="#000"/>
<rect x="1004" y="276" width="2" height="2" fill="#aaaaaa"/>
<rect x="1000" y="278" width="2" height="2" fill="#000"/>
<rect x="1002" y="278" width="2" height="2" fill="#aaaaaa"/>
<rect x="1000" y="292" width="2" height="2" fill="#aaaaaa"/>
<rect x="1002" y="292" width="16" height="2" fill="#000"/>
<rect x="1018" y="292" width="2" height="2" fill="#aaaaaa"/>
<rect x="1000" y="294" width="2" height="2" fill="#000"/>
<rect x="1018" y="294" width="2" height="2" fill="#000"/>
<rect x="1000" y="296" width="2" height="2" fill="#000"/>
<rect x="1018" y="296" width="2" height="2" fill="#000"/>
<rect x="1000" y="298" width="2" height="2" fill="#000"/>
<rect x="1018" y="298" width="2" height="2" fill="#000"/>
<rect x="1000" y="300" width="2" height="2" fill="#000"/>
<rect x="1018" y="300" width="2" height="2" fill="#000"/>
<rect x="1000" y="302" width="2" height="2" fill="#000"/>
<rect x="1018" y="302" width="2" height="2" fill="#000"/>
<rect x="1000" y="304" width="2" height="2" fill="#000"/>
<rect x="1018" y="304" width="2" height="2" fill="#000"/>
<rect x="1000" y="306" width="2" height="2" fill="#aaaaaa"/>
<rect x="1002" y="306" width="16" height="2" fill="#000"/>
<rect x="1018" y="306" width="2" height="2" fill="#aaaaaa"/>
<rect x="1008" y="320" width="2" height="2" fill="#808080"/>
<rect x="1010" y="320" width="4" height="2" fill="#000"/>
<rect x="1014" y="320" width="2" height="2" fill="#808080"/>
<rect x="1012" y="322" width="6" height="2" fill="#000"/>
<rect x="1010" y="324" width="2" height="2" fill="#808080"/>
<rect x="1012" y="324" width="6" height="2" fill="#000"/>
<rect x="1018" y="324" width="2" height="2" fill="#808080"/>
<rect x="1006" y="326" width="2" height="2" fill="#808080"/>
<rect x="1008" y="326" width="12" height="2" fill="#000"/>
<rect x="1000" y="328" width="2" height="2" fill="#808080"/>
<rect x="1002" y="328" width="18" height="2" fill="#000"/>
<rect x="998" y="330" width="2" height="2" fill="#808080"/>
<rect x="1000" y="330" width="20" height="2" fill="#000"/>
<rect x="998" y="332" width="20" height="2" fill="#000"/>
<rect x="1018" y="332" width="2" height="2" fill="#808080"/>
<rect x="998" y="334" width="20" height="2" fill="#000"/>
<rect x="998" y="336" width="2" height="2" fill="#808080"/>
<rect x="1000" y="336" width="14" height="2" fill="#000"/>
<rect x="1014" y="336" width="2" height="2" fill="#808080"/>
<rect x="1000" y="338" width="2" height="2" fill="#808080"/>
<rect x="1002" y="338" width="8" height="2" fill="#000"/>
<rect x="1010" y="338" width="2" height="2" fill="#808080"/>
<rect x="1014" y="348" width="2" height="2" fill="#5a5a5a"/>
<rect x="1018" y="348" width="2" height="2" fill="#5a5a5a"/>
<rect x="1010" y="352" width="2" height="2" fill="#5a5a5a"/>
<rect x="1014" y="352" width="2" height="2" fill="#5a5a5a"/>
<rect x="1018" y="352" width="2" height="2" fill="#5a5a5a"/>
<rect x="1008" y="354" width="2" height="2" fill="#5a5a5a"/>
<rect x="1010" y="354" width="2" height="2" fill="#fff"/>
<rect x="1012" y="354" width="2" height="2" fill="#5a5a5a"/>
<rect x="1006" y="356" width="6" height="2" fill="#808080"/>
<rect x="1012" y="356" width="2" height="2" fill="#fff"/>
<rect x="1014" y="356" width="2" height="2" fill="#5a5a5a"/>
<rect x="1004" y="358" width="2" height="2" fill="#808080"/>
<rect x="1006" y="358" width="2" height="2" fill="#000"/>
<rect x="1008" y="358" width="4" height="2" fill="#808080"/>
<rect x="1012" y="358" width="2" height="2" fill="#5a5a5a"/>
<rect x="1002" y="360" width="4" height="2" fill="#000"/>
<rect x="1006" y="360" width="2" height="2" fill="#a0a0a0"/>
<rect x="1008" y="360" width="2" height="2" fill="#000"/>
<rect x="1010" y="360" width="2" height="2" fill="#808080"/>
<rect x="1000" y="362" width="8" height="2" fill="#000"/>
<rect x="1008" y="362" width="2" height="2" fill="#808080"/>
<rect x="1000" y="364" width="8" height="2" fill="#000"/>
<rect x="1000" y="366" width="2" height="2" fill="#808080"/>
<rect x="1002" y="366" width="4" height="2" fill="#000"/>
<rect x="1000" y="382" width="18" height="2" fill="#000"/>
<rect x="1000" y="384" width="18" height="2" fill="#000"/>
<rect x="1000" y="386" width="2" height="2" fill="#000"/>
<rect x="1002" y="386" width="4" height="2" fill="#808080"/>
<rect x="1006" y="386" width="6" height="2" fill="#000"/>
<rect x="1012" y="386" width="4" height="2" fill="#808080"/>
<rect x="1016" y="386" width="2" height="2" fill="#000"/>
<rect x="1000" y="388" width="2" height="2" fill="#808080"/>
<rect x="1006" y="388" width="6" height="2" fill="#000"/>
<rect x="1016" y="388" width="2" height="2" fill="#808080"/>
<rect x="1006" y="390" width="6" height="2" fill="#000"/>
<rect x="1006" y="392" width="6" height="2" fill="#000"/>
<rect x="1006" y="394" width="6" height="2" fill="#000"/>
<rect x="1004" y="396" width="2" height="2" fill="#808080"/>
<rect x="1006" y="396" width="6" height="2" fill="#000"/>
<rect x="1012" y="396" width="2" height="2" fill="#808080"/>
<rect x="1002" y="398" width="2" height="2" fill="#808080"/>
<rect x="1004" y="398" width="10" height="2" fill="#000"/>
<rect x="1014" y="398" width="2" height="2" fill="#808080"/>
<rect x="996" y="404" width="30" height="2" fill="#8c8c8c"/>
<rect x="996" y="406" width="30" height="2" fill="#000"/>
<rect x="996" y="408" width="30" height="2" fill="#5b6d79"/>
<rect x="134" y="564" width="30" height="24" fill="#000"/>
<rect x="132" y="566" width="34" height="20" fill="#000"/>
<rect x="134" y="566" width="30" height="18" fill="#fff"/>
<rect x="136" y="568" width="26" height="14" fill="#c6c6c6"/>
<rect x="134" y="584" width="30" height="2" fill="#8c8c8c"/>
<rect x="134" y="588" width="30" height="2" fill="#5b6d79"/>
<rect x="144" y="570" width="2" height="2" fill="#000"/>
<rect x="152" y="570" width="2" height="2" fill="#000"/>
<rect x="144" y="572" width="2" height="2" fill="#000"/>
<rect x="150" y="572" width="4" height="2" fill="#000"/>
<rect x="144" y="574" width="2" height="2" fill="#000"/>
<rect x="148" y="574" width="6" height="2" fill="#000"/>
<rect x="144" y="576" width="2" height="2" fill="#000"/>
<rect x="150" y="576" width="4" height="2" fill="#000"/>
<rect x="144" y="578" width="2" height="2" fill="#000"/>
<rect x="152" y="578" width="2" height="2" fill="#000"/>
<rect x="166" y="564" width="30" height="24" fill="#000"/>
<rect x="164" y="566" width="34" height="20" fill="#000"/>
<rect x="166" y="566" width="30" height="18" fill="#fff"/>
<rect x="168" y="568" width="26" height="14" fill="#c6c6c6"/>
<rect x="166" y="584" width="30" height="2" fill="#8c8c8c"/>
<rect x="166" y="588" width="30" height="2" fill="#5b6d79"/>
<rect x="180" y="570" width="2" height="2" fill="#000"/>
<rect x="184" y="570" width="2" height="2" fill="#000"/>
<rect x="178" y="572" width="4" height="2" fill="#000"/>
<rect x="184" y="572" width="2" height="2" fill="#000"/>
<rect x="176" y="574" width="6" height="2" fill="#000"/>
<rect x="184" y="574" width="2" height="2" fill="#000"/>
<rect x="178" y="576" width="4" height="2" fill="#000"/>
<rect x="184" y="576" width="2" height="2" fill="#000"/>
<rect x="180" y="578" width="2" height="2" fill="#000"/>
<rect x="184" y="578" width="2" height="2" fill="#000"/>
<rect x="198" y="564" width="30" height="24" fill="#000"/>
<rect x="196" y="566" width="34" height="20" fill="#000"/>
<rect x="198" y="566" width="30" height="18" fill="#fff"/>
<rect x="200" y="568" width="26" height="14" fill="#c6c6c6"/>
<rect x="198" y="584" width="30" height="2" fill="#8c8c8c"/>
<rect x="198" y="588" width="30" height="2" fill="#5b6d79"/>
<rect x="210" y="570" width="2" height="2" fill="#000"/>
<rect x="210" y="572" width="4" height="2" fill="#000"/>
<rect x="210" y="574" width="6" height="2" fill="#000"/>
<rect x="210" y="576" width="4" height="2" fill="#000"/>
<rect x="210" y="578" width="2" height="2" fill="#000"/>
<rect x="230" y="564" width="30" height="24" fill="#000"/>
<rect x="228" y="566" width="34" height="20" fill="#000"/>
<rect x="230" y="566" width="30" height="18" fill="#fff"/>
<rect x="232" y="568" width="26" height="14" fill="#c6c6c6"/>
<rect x="230" y="584" width="30" height="2" fill="#8c8c8c"/>
<rect x="230" y="588" width="30" height="2" fill="#5b6d79"/>
<rect x="240" y="570" width="2" height="2" fill="#000"/>
<rect x="244" y="570" width="2" height="2" fill="#000"/>
<rect x="240" y="572" width="2" height="2" fill="#000"/>
<rect x="244" y="572" width="4" height="2" fill="#000"/>
<rect x="240" y="574" width="2" height="2" fill="#000"/>
<rect x="244" y="574" width="6" height="2" fill="#000"/>
<rect x="240" y="576" width="2" height="2" fill="#000"/>
<rect x="244" y="576" width="4" height="2" fill="#000"/>
<rect x="240" y="578" width="2" height="2" fill="#000"/>
<rect x="244" y="578" width="2" height="2" fill="#000"/>
<rect x="262" y="564" width="30" height="24" fill="#000"/>
<rect x="260" y="566" width="34" height="20" fill="#000"/>
<rect x="262" y="566" width="30" height="18" fill="#fff"/>
<rect x="264" y="568" width="26" height="14" fill="#c6c6c6"/>
<rect x="262" y="584" width="30" height="2" fill="#8c8c8c"/>
<rect x="262" y="588" width="30" height="2" fill="#5b6d79"/>
<rect x="272" y="570" width="2" height="2" fill="#000"/>
<rect x="280" y="570" width="2" height="2" fill="#000"/>
<rect x="272" y="572" width="4" height="2" fill="#000"/>
<rect x="280" y="572" width="2" height="2" fill="#000"/>
<rect x="272" y="574" width="6" height="2" fill="#000"/>
<rect x="280" y="574" width="2" height="2" fill="#000"/>
<rect x="272" y="576" width="4" height="2" fill="#000"/>
<rect x="280" y="576" width="2" height="2" fill="#000"/>
<rect x="272" y="578" width="2" height="2" fill="#000"/>
<rect x="280" y="578" width="2" height="2" fill="#000"/>
<rect x="132" y="594" width="860" height="90" fill="#fff"/>
<rect x="132" y="594" width="2" height="2" fill="#6f8794"/>
<rect x="134" y="596" width="856" height="90" fill="#c6c6c6"/>
<rect x="156" y="596" width="2" height="22" fill="#fff"/>
<rect x="180" y="596" width="2" height="22" fill="#fff"/>
<rect x="204" y="596" width="2" height="22" fill="#fff"/>
<rect x="228" y="596" width="2" height="22" fill="#fff"/>
<rect x="252" y="596" width="2" height="22" fill="#fff"/>
<rect x="156" y="620" width="2" height="22" fill="#fff"/>
<rect x="180" y="620" width="2" height="22" fill="#fff"/>
<rect x="204" y="620" width="2" height="22" fill="#fff"/>
<rect x="134" y="620" width="276" height="22" fill="#7d929e"/>
<rect x="156" y="620" width="2" height="22" fill="#fff"/>
<rect x="180" y="620" width="2" height="22" fill="#fff"/>
<rect x="204" y="620" width="2" height="22" fill="#fff"/>
<rect x="410" y="596" width="2" height="48" fill="#fff"/>
<rect x="434" y="596" width="2" height="48" fill="#fff"/>
<rect x="134" y="618" width="302" height="2" fill="#fff"/>
<rect x="134" y="642" width="302" height="2" fill="#fff"/>
<rect x="412" y="596" width="22" height="22" fill="#7d929e"/>
<rect x="412" y="620" width="22" height="22" fill="#55636e"/>
<rect x="156" y="618" width="2" height="2" fill="#6f8794"/>
<rect x="180" y="618" width="2" height="2" fill="#6f8794"/>
<rect x="204" y="618" width="2" height="2" fill="#6f8794"/>
<rect x="410" y="618" width="2" height="2" fill="#6f8794"/>
<rect x="140" y="602" width="8" height="2" fill="#000"/>
<rect x="138" y="604" width="6" height="2" fill="#000"/>
<rect x="144" y="604" width="2" height="2" fill="#fff"/>
<rect x="146" y="604" width="4" height="2" fill="#000"/>
<rect x="136" y="606" width="2" height="2" fill="#000"/>
<rect x="138" y="606" width="2" height="2" fill="#dcdcdc"/>
<rect x="140" y="606" width="8" height="2" fill="#000"/>
<rect x="148" y="606" width="2" height="2" fill="#dcdcdc"/>
<rect x="150" y="606" width="2" height="2" fill="#000"/>
<rect x="136" y="608" width="2" height="2" fill="#000"/>
<rect x="138" y="608" width="4" height="2" fill="#dcdcdc"/>
<rect x="142" y="608" width="4" height="2" fill="#000"/>
<rect x="146" y="608" width="4" height="2" fill="#dcdcdc"/>
<rect x="150" y="608" width="2" height="2" fill="#000"/>
<rect x="138" y="610" width="2" height="2" fill="#000"/>
<rect x="140" y="610" width="8" height="2" fill="#dcdcdc"/>
<rect x="148" y="610" width="2" height="2" fill="#000"/>
<rect x="140" y="612" width="8" height="2" fill="#000"/>
<rect x="164" y="598" width="2" height="2" fill="#aaaaaa"/>
<rect x="166" y="598" width="4" height="2" fill="#000"/>
<rect x="170" y="598" width="2" height="2" fill="#aaaaaa"/>
<rect x="164" y="600" width="2" height="2" fill="#000"/>
<rect x="170" y="600" width="2" height="2" fill="#000"/>
<rect x="164" y="602" width="2" height="2" fill="#000"/>
<rect x="162" y="604" width="12" height="2" fill="#000"/>
<rect x="162" y="606" width="6" height="2" fill="#000"/>
<rect x="168" y="606" width="2" height="2" fill="#808080"/>
<rect x="170" y="606" width="4" height="2" fill="#000"/>
<rect x="162" y="608" width="6" height="2" fill="#000"/>
<rect x="168" y="608" width="2" height="2" fill="#808080"/>
<rect x="170" y="608" width="4" height="2" fill="#000"/>
<rect x="162" y="610" width="12" height="2" fill="#000"/>
<rect x="162" y="612" width="12" height="2" fill="#808080"/>
<rect x="186" y="602" width="4" height="2" fill="#000"/>
<rect x="196" y="602" width="4" height="2" fill="#000"/>
<rect x="184" y="604" width="8" height="2" fill="#000"/>
<rect x="194" y="604" width="8" height="2" fill="#000"/>
<rect x="184" y="606" width="8" height="2" fill="#000"/>
<rect x="194" y="606" width="8" height="2" fill="#000"/>
<rect x="184" y="608" width="2" height="2" fill="#808080"/>
<rect x="186" y="608" width="4" height="2" fill="#000"/>
<rect x="190" y="608" width="2" height="2" fill="#808080"/>
<rect x="194" y="608" width="2" height="2" fill="#808080"/>
<rect x="196" y="608" width="4" height="2" fill="#000"/>
<rect x="200" y="608" width="2" height="2" fill="#808080"/>
<rect x="186" y="610" width="4" height="2" fill="#808080"/>
<rect x="196" y="610" width="4" height="2" fill="#808080"/>
<rect x="218" y="598" width="4" height="2" fill="#000"/>
<rect x="210" y="600" width="8" height="2" fill="#808080"/>
<rect x="218" y="600" width="4" height="2" fill="#000"/>
<rect x="222" y="600" width="2" height="2" fill="#808080"/>
<rect x="218" y="602" width="4" height="2" fill="#000"/>
<rect x="212" y="604" width="4" height="2" fill="#000"/>
<rect x="210" y="606" width="2" height="2" fill="#808080"/>
<rect x="212" y="606" width="4" height="2" fill="#000"/>
<rect x="216" y="606" width="8" height="2" fill="#808080"/>
<rect x="212" y="608" width="4" height="2" fill="#000"/>
<rect x="216" y="610" width="4" height="2" fill="#000"/>
<rect x="210" y="612" width="6" height="2" fill="#808080"/>
<rect x="216" y="612" width="4" height="2" fill="#000"/>
<rect x="220" y="612" width="4" height="2" fill="#808080"/>
<rect x="216" y="614" width="4" height="2" fill="#000"/>
<rect x="234" y="600" width="10" height="2" fill="#000"/>
<rect x="234" y="602" width="2" height="2" fill="#000"/>
<rect x="242" y="602" width="2" height="2" fill="#000"/>
<rect x="234" y="604" width="2" height="2" fill="#000"/>
<rect x="242" y="604" width="2" height="2" fill="#000"/>
<rect x="244" y="604" width="4" height="2" fill="#808080"/>
<rect x="234" y="606" width="2" height="2" fill="#000"/>
<rect x="242" y="606" width="2" height="2" fill="#000"/>
<rect x="246" y="606" width="2" height="2" fill="#808080"/>
<rect x="234" y="608" width="10" height="2" fill="#000"/>
<rect x="246" y="608" width="2" height="2" fill="#808080"/>
<rect x="238" y="610" width="2" height="2" fill="#808080"/>
<rect x="246" y="610" width="2" height="2" fill="#808080"/>
<rect x="238" y="612" width="10" height="2" fill="#808080"/>
<rect x="140" y="626" width="8" height="2" fill="#fff"/>
<rect x="138" y="628" width="6" height="2" fill="#fff"/>
<rect x="144" y="628" width="2" height="2" fill="#7d929e"/>
<rect x="146" y="628" width="4" height="2" fill="#fff"/>
<rect x="136" y="630" width="2" height="2" fill="#fff"/>
<rect x="138" y="630" width="2" height="2" fill="#a9b8c2"/>
<rect x="140" y="630" width="8" height="2" fill="#fff"/>
<rect x="148" y="630" width="2" height="2" fill="#a9b8c2"/>
<rect x="150" y="630" width="2" height="2" fill="#fff"/>
<rect x="136" y="632" width="2" height="2" fill="#fff"/>
<rect x="138" y="632" width="4" height="2" fill="#a9b8c2"/>
<rect x="142" y="632" width="4" height="2" fill="#fff"/>
<rect x="146" y="632" width="4" height="2" fill="#a9b8c2"/>
<rect x="150" y="632" width="2" height="2" fill="#fff"/>
<rect x="138" y="634" width="2" height="2" fill="#fff"/>
<rect x="140" y="634" width="8" height="2" fill="#a9b8c2"/>
<rect x="148" y="634" width="2" height="2" fill="#fff"/>
<rect x="140" y="636" width="8" height="2" fill="#fff"/>
<rect x="164" y="622" width="2" height="2" fill="#55636e"/>
<rect x="166" y="622" width="4" height="2" fill="#fff"/>
<rect x="170" y="622" width="2" height="2" fill="#55636e"/>
<rect x="164" y="624" width="2" height="2" fill="#fff"/>
<rect x="170" y="624" width="2" height="2" fill="#fff"/>
<rect x="164" y="626" width="2" height="2" fill="#fff"/>
<rect x="162" y="628" width="12" height="2" fill="#fff"/>
<rect x="162" y="630" width="6" height="2" fill="#fff"/>
<rect x="168" y="630" width="2" height="2" fill="#55636e"/>
<rect x="170" y="630" width="4" height="2" fill="#fff"/>
<rect x="162" y="632" width="6" height="2" fill="#fff"/>
<rect x="168" y="632" width="2" height="2" fill="#55636e"/>
<rect x="170" y="632" width="4" height="2" fill="#fff"/>
<rect x="162" y="634" width="12" height="2" fill="#fff"/>
<rect x="162" y="636" width="12" height="2" fill="#55636e"/>
<rect x="186" y="626" width="4" height="2" fill="#fff"/>
<rect x="196" y="626" width="4" height="2" fill="#fff"/>
<rect x="184" y="628" width="8" height="2" fill="#fff"/>
<rect x="194" y="628" width="8" height="2" fill="#fff"/>
<rect x="184" y="630" width="8" height="2" fill="#fff"/>
<rect x="194" y="630" width="8" height="2" fill="#fff"/>
<rect x="184" y="632" width="2" height="2" fill="#55636e"/>
<rect x="186" y="632" width="4" height="2" fill="#fff"/>
<rect x="190" y="632" width="2" height="2" fill="#55636e"/>
<rect x="194" y="632" width="2" height="2" fill="#55636e"/>
<rect x="196" y="632" width="4" height="2" fill="#fff"/>
<rect x="200" y="632" width="2" height="2" fill="#55636e"/>
<rect x="186" y="634" width="4" height="2" fill="#55636e"/>
<rect x="196" y="634" width="4" height="2" fill="#55636e"/>
<ellipse cx="423" cy="632.5" rx="7" ry="7" fill="#3f4a53"/>
<circle cx="423" cy="631" r="7.2" fill="#fff"/></svg>

<div class="t" id="tmask" style="left:351px;top:16px;font:bold 14px 'Liberation Sans',sans-serif;color:#fff;letter-spacing:-0.2px">Mask</div>
<div class="t" id="tfast" style="left:486px;top:15px;font:16px 'DejaVu Sans','Liberation Sans',sans-serif;color:#000;-webkit-text-stroke:0.5px #000;letter-spacing:0.42px">Fast Rotation</div>
<div class="t" id="tdots" style="left:771.1px;top:16.5px;font:bold 10px 'DejaVu Sans','Liberation Sans',sans-serif;color:#000;letter-spacing:0.2px">...</div>
<div class="t" id="tlayer" style="left:210px;top:621px;font:16px 'DejaVu Sans','Liberation Sans',sans-serif;color:#fff;-webkit-text-stroke:0.5px #fff;letter-spacing:0.6px">Layer 1</div>
<div class="t" id="tone" style="left:418.5px;top:598.6px;font:bold 14px 'Liberation Sans',sans-serif;color:#fff">1</div>


<div class="av" style="top:253px;background:#3b3a50">
  <i style="left:3px;top:2.5px;width:30px;height:29px;background:radial-gradient(circle at 35% 72%,#b6a1b0 0,#a5909c 45%,#94808c 85%)"></i>
  <i style="left:0px;top:7px;width:17px;height:7px;background:#b68d8f;transform:rotate(12deg);filter:blur(.7px)"></i>
  <i style="left:6px;top:2px;width:9px;height:3px;background:#8d8a9c;transform:rotate(-28deg);filter:blur(.6px)"></i>
</div>
<div class="av" style="top:293px;background:#cfb7bc">
  <i style="left:4px;top:4px;width:6px;height:5px;background:#c98a80;filter:blur(.6px)"></i>
  <i style="left:9px;top:6px;width:8px;height:11px;background:#dccfd6;filter:blur(.8px)"></i>
  <i style="left:15px;top:8px;width:6px;height:8px;background:#c59aa0;filter:blur(.7px)"></i>
  <i style="left:22px;top:8px;width:6px;height:12px;background:#d6c4cb;filter:blur(.8px)"></i>
  <i style="left:4px;top:13px;width:5px;height:4px;background:#c4747c;filter:blur(.6px)"></i>
  <i style="left:9px;top:19px;width:7px;height:3px;background:#cf9a7c;filter:blur(.5px)"></i>
  <i style="left:18px;top:17px;width:4px;height:5px;background:#b98088;filter:blur(.6px)"></i>
  <i style="left:7px;top:23px;width:5px;height:5px;background:#b9929a;filter:blur(.6px)"></i>
  <i style="left:14px;top:24px;width:5px;height:7px;background:#ddd0cc;filter:blur(.6px)"></i>
  <i style="left:20px;top:23px;width:5px;height:5px;background:#c08a92;filter:blur(.6px)"></i>
  <i style="left:11px;top:3px;width:3px;height:2px;background:#8a5560;filter:blur(.4px)"></i>
</div>
<div class="av" style="top:333px;background:#8c878c;box-shadow:inset 0 0 0 2.5px #8c878c, inset 0 0 0 3.5px #979297">
  <i style="left:6px;top:4px;width:22px;height:14px;background:#768d88;border-radius:50% 50% 40% 40%;filter:blur(.5px)"></i>
  <i style="left:15px;top:17px;width:11px;height:11px;background:#ab97a6;filter:blur(.5px)"></i>
  <i style="left:7.5px;top:20px;width:7px;height:9.5px;background:#c9b577;transform:rotate(20deg);filter:blur(.4px)"></i>
  <i style="left:14.5px;top:11px;width:4.5px;height:8px;background:#4f444f;border-radius:1px;filter:blur(.5px)"></i>
  <i style="left:10px;top:16px;width:5px;height:4px;background:#a39aa6;transform:rotate(35deg);filter:blur(.4px)"></i>
</div>
<div class="pill" id="p1" style="top:257px;width:64px">ceilinggg</div>
<div class="pill" id="p2" style="top:297px;width:121px">Lizard<div class="badge"><svg class="heart" viewBox="0 0 13 11"><path d="M6.5 10.6 C2 7.4 0.3 5.2 0.3 3.2 C0.3 1.4 1.7 0.3 3.3 0.3 C4.6 0.3 5.8 1 6.5 2.2 C7.2 1 8.4 0.3 9.7 0.3 C11.3 0.3 12.7 1.4 12.7 3.2 C12.7 5.2 11 7.4 6.5 10.6 Z" fill="#f0b0b0" fill-opacity=".62" stroke="#f3d0d0" stroke-opacity=".45" stroke-width=".9"/></svg>MEOW</div></div>
<div class="pill" id="p3" style="top:337px;width:50px">pengu</div>

</div>
</body></html>
